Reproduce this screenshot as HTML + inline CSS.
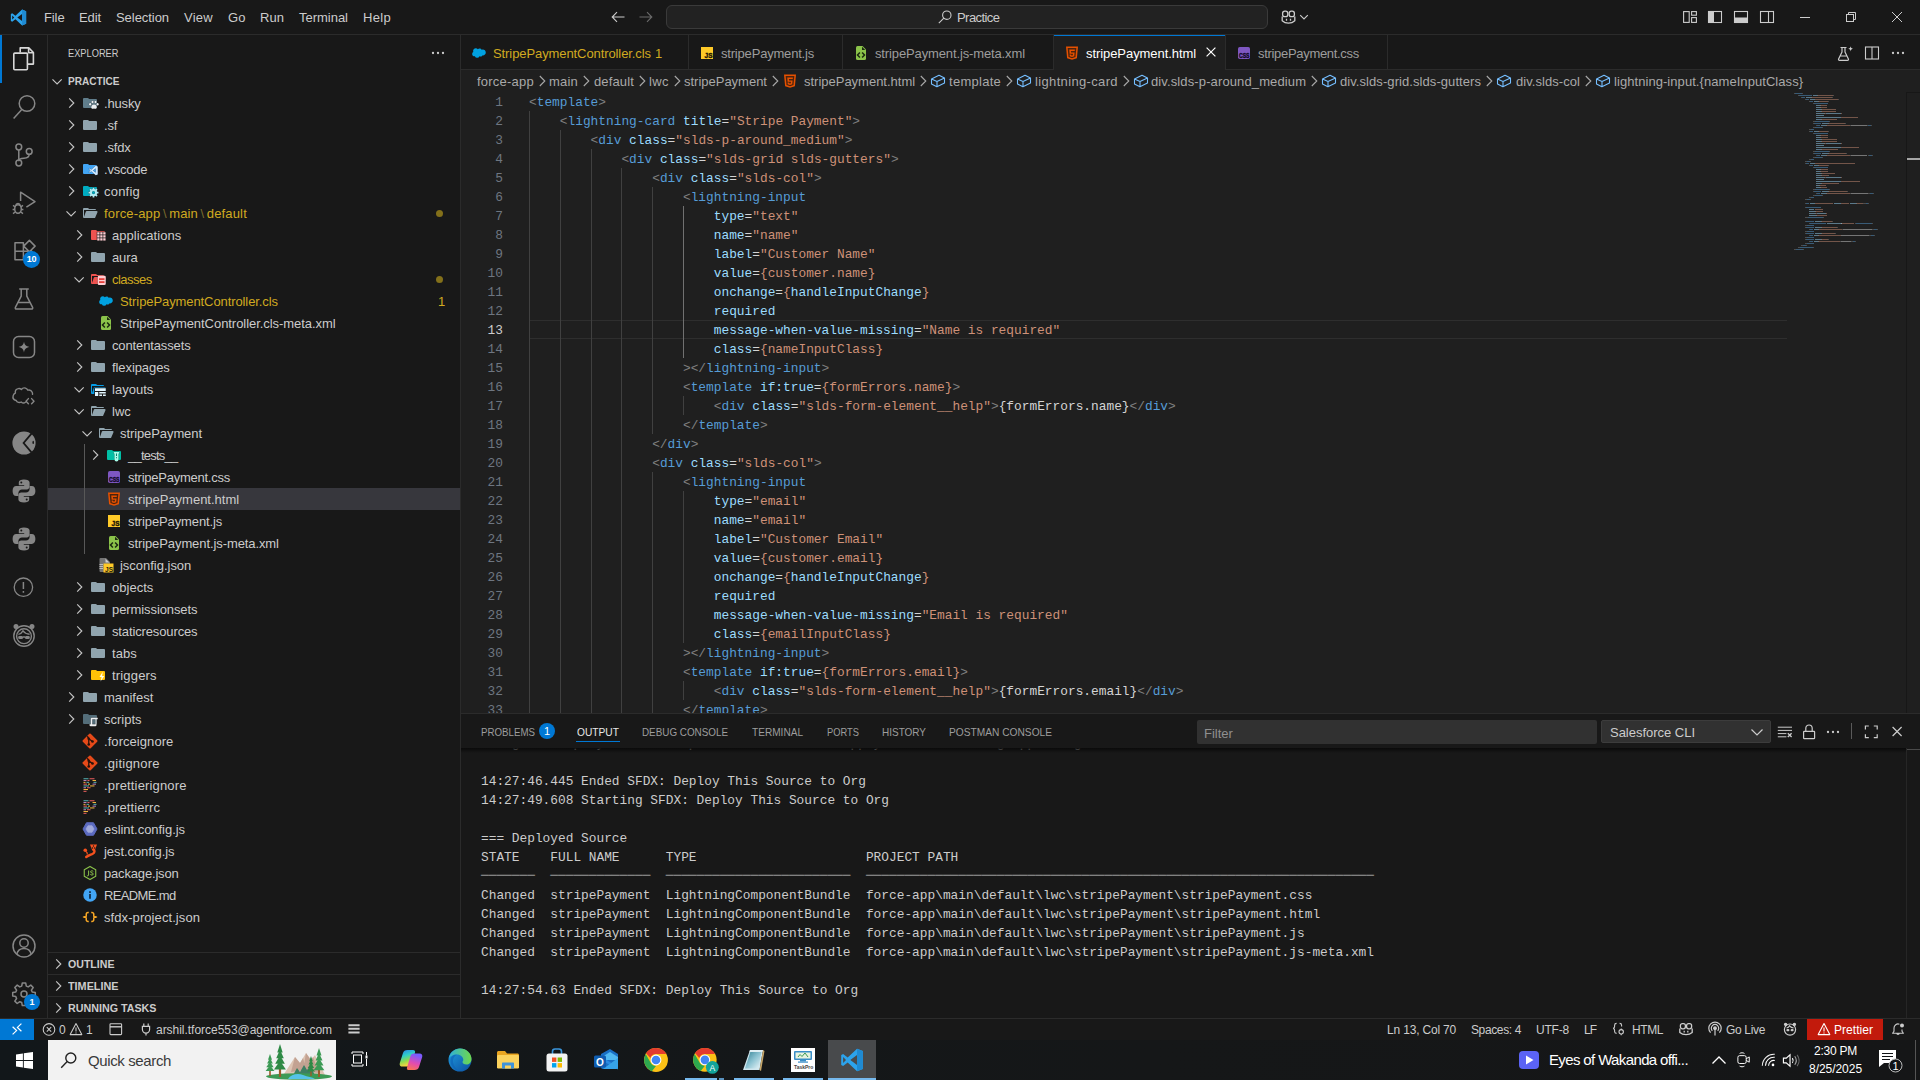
<!DOCTYPE html>
<html lang="en">
<head>
<meta charset="utf-8">
<title>stripePayment.html - Practice - Visual Studio Code</title>
<style>
*{box-sizing:border-box;margin:0;padding:0}
html,body{width:1920px;height:1080px;overflow:hidden;background:#181818}
body{position:relative;font-family:"Liberation Sans",sans-serif;font-size:13px;color:#ccc;-webkit-font-smoothing:antialiased}
.abs{position:absolute}
svg{display:block;overflow:visible}
.t{position:absolute;white-space:pre;line-height:1}
/* title bar */
#titlebar{position:absolute;left:0;top:0;width:1920px;height:35px;background:#181818;border-bottom:1px solid #2b2b2b}
#titlebar .m{position:absolute;top:10px;font-size:13px;color:#ccc;white-space:pre;line-height:15px}
#cmd{position:absolute;left:666px;top:5px;width:602px;height:24px;border:1px solid #3a3a3a;border-radius:6px;background:#222222}
/* activity bar */
#activity{position:absolute;left:0;top:35px;width:48px;height:983px;background:#181818;border-right:1px solid #2b2b2b}
#activity .ic{position:absolute;left:12px;width:24px;height:24px;color:#868686}
/* sidebar */
#sidebar{position:absolute;left:48px;top:35px;width:413px;height:983px;background:#181818;border-right:1px solid #2b2b2b;overflow:hidden}
.row{position:absolute;left:0;width:412px;height:22px}
.row .lb{position:absolute;top:4px;line-height:16px;font-size:13px;white-space:pre;color:#ccc}
.row .ch{position:absolute;top:3px;width:16px;height:16px;color:#c5c5c5}
.row .fi{position:absolute;top:3px;width:16px;height:16px}
.mod .lb{color:#d0aa20}
.sel{background:#37373d}
.ph{position:absolute;left:0;width:412px;height:22px;box-shadow:inset 0 1px 0 #2b2b2b}
.ph .lb{position:absolute;left:20px;top:4px;font-size:11px;font-weight:bold;color:#ccc;line-height:14px;white-space:pre}
.ph .ch{position:absolute;left:2px;top:3px;width:16px;height:16px;color:#c5c5c5}
/* editor */
#editor{position:absolute;left:461px;top:35px;width:1459px;height:678px;background:#1f1f1f;overflow:hidden}
#tabs{position:absolute;left:0;top:0;width:1459px;height:35px;background:#181818;border-bottom:1px solid #2b2b2b}
.tab{position:absolute;top:0;height:35px;border-right:1px solid #2b2b2b;color:#9d9d9d}
.tab .lb{position:absolute;top:10.500px;line-height:16px;font-size:13px;white-space:pre}
.tab .fi{position:absolute;top:10px;width:16px;height:16px}
.tab.act{background:#1f1f1f;box-shadow:inset 0 1px 0 #0078d4;color:#fff;height:36px}
#crumbs{position:absolute;left:0;top:35px;width:1459px;height:22px;background:#1f1f1f;color:#a9a9a9}
#crumbs .c{position:absolute;top:4px;line-height:16px;font-size:13px;white-space:pre}
#crumbs .sep{position:absolute;top:3px;width:16px;height:16px;color:#a9a9a9}
#crumbs .fi{position:absolute;top:3px;width:16px;height:16px}
#code{position:absolute;left:0;top:57px;width:1459px;height:621px;overflow:hidden;font-family:"Liberation Mono",monospace;font-size:12.832px;color:#d4d4d4}
.cl{position:absolute;left:68px;height:19px;line-height:21px;white-space:pre}
.nu{position:absolute;left:0;width:42px;height:19px;line-height:21px;text-align:right;color:#6e7681}
.nu.cur{color:#ccc}
.g{position:absolute;width:1px;background:#404040}
.g.a{background:#707070}
.p{color:#808080}.n{color:#569cd6}.a{color:#9cdcfe}.s{color:#ce9178}.w{color:#d4d4d4}
/* panel */
#panel{position:absolute;left:461px;top:714px;width:1459px;height:304px;background:#181818;overflow:hidden}
#panel .pt{position:absolute;top:11px;font-size:11px;line-height:14px;color:#9d9d9d;white-space:pre}
#out{position:absolute;left:0;top:34px;width:1445px;height:270px;overflow:hidden;font-family:"Liberation Mono",monospace;font-size:12.832px;color:#ccc}
.ol{position:absolute;left:20px;height:19px;line-height:19px;white-space:pre}
/* status */
#status{position:absolute;left:0;top:1018px;width:1920px;height:22px;background:#181818;box-shadow:inset 0 1px 0 #2b2b2b;color:#ccc;font-size:12px}
#status .s{position:absolute;top:4.500px;line-height:15px;white-space:pre;color:#ccc}
#status .ic{position:absolute;top:4px;width:14px;height:14px;color:#ccc}
/* taskbar */
#taskbar{position:absolute;left:0;top:1040px;width:1920px;height:40px;background:linear-gradient(90deg,#12171a,#151718 60%,#151617)}
</style>
</head>
<body>
<div id="titlebar">
<svg class="abs" style="left:10px;top:9px" width="17" height="17" viewBox="0 0 100 100"><path d="M71 3 32 40 13 25 5 29v42l8 4 19-15 39 37 24-10V13zM13 62V38l12 12zm58 9L43 50l28-21z" fill="#2ca3ec"/><path d="M71 3 95 13v74L71 97z" fill="#1f8ad2"/></svg>
<span class="m" style="letter-spacing:-0.11px;left:44px">File</span>
<span class="m" style="letter-spacing:-0.10px;left:79px">Edit</span>
<span class="m" style="letter-spacing:-0.05px;left:116px">Selection</span>
<span class="m" style="letter-spacing:0.26px;left:184px">View</span>
<span class="m" style="letter-spacing:0.08px;left:228px">Go</span>
<span class="m" style="letter-spacing:0.05px;left:260px">Run</span>
<span class="m" style="letter-spacing:-0.02px;left:299px">Terminal</span>
<span class="m" style="letter-spacing:0.31px;left:363px">Help</span>
<svg class="abs" style="left:610px;top:9px" width="16" height="16" viewBox="0 0 16 16" fill="none" stroke="#ccc" stroke-width="1.1"><path d="M14.5 8h-12M7 3.2 2.2 8 7 12.8"/></svg>
<svg class="abs" style="left:638px;top:9px" width="16" height="16" viewBox="0 0 16 16" fill="none" stroke="#6b6b6b" stroke-width="1.1"><path d="M1.5 8h12M9 3.2 13.8 8 9 12.8"/></svg>
<div id="cmd"></div>
<svg class="abs" style="left:937px;top:9px" width="16" height="16" viewBox="0 0 16 16" fill="none" stroke="#ccc" stroke-width="1.1"><circle cx="9.8" cy="6.2" r="4.2"/><path d="M6.8 9.2 1.8 14.2"/></svg>
<span class="m" style="letter-spacing:-0.56px;left:957px">Practice</span>
<svg class="abs" style="left:1280px;top:9px" width="17" height="16" viewBox="0 0 17 16" fill="none" stroke="#ccc" stroke-width="1.3"><path d="M2.2 7.5v4.2c1.8 1.7 4 2.4 6.3 2.4s4.500-.7 6.300-2.400V7.500"/><rect x="2.600" y="2.200" width="5.200" height="5.400" rx="2.200"/><rect x="9.200" y="2.200" width="5.200" height="5.400" rx="2.200"/><path d="M6.500 9.700v2M10.500 9.700v2"/></svg>
<svg class="abs" style="left:1299px;top:12px" width="10" height="10" viewBox="0 0 10 10" fill="none" stroke="#ccc" stroke-width="1.1"><path d="M1.200 3.200 5 7l3.800-3.800"/></svg>
<svg class="abs" style="left:1682px;top:9px" width="16" height="16" viewBox="0 0 16 16" fill="none" stroke="#ccc" stroke-width="1.1"><rect x="1.600" y="2.600" width="5.600" height="10.800"/><rect x="9.600" y="2.600" width="4.800" height="3.600"/><rect x="9.600" y="8.600" width="4.800" height="4.800"/></svg>
<svg class="abs" style="left:1707px;top:9px" width="16" height="16" viewBox="0 0 16 16"><rect x="1.500" y="2.500" width="13" height="11" fill="none" stroke="#ccc" stroke-width="1.1"/><rect x="1.500" y="2.500" width="5.500" height="11" fill="#ccc"/></svg>
<svg class="abs" style="left:1733px;top:9px" width="16" height="16" viewBox="0 0 16 16"><rect x="1.500" y="2.500" width="13" height="11" fill="none" stroke="#ccc" stroke-width="1.1"/><rect x="1.500" y="8.500" width="13" height="5" fill="#ccc"/></svg>
<svg class="abs" style="left:1759px;top:9px" width="16" height="16" viewBox="0 0 16 16" fill="none" stroke="#ccc" stroke-width="1.1"><rect x="1.500" y="2.500" width="13" height="11"/><path d="M9.500 2.500v11"/></svg>
<svg class="abs" style="left:1799px;top:12px" width="12" height="12" viewBox="0 0 12 12" fill="none" stroke="#ccc" stroke-width="1"><path d="M1 5.500h10"/></svg>
<svg class="abs" style="left:1845px;top:11px" width="12" height="12" viewBox="0 0 12 12" fill="none" stroke="#ccc" stroke-width="1"><rect x="1.500" y="3.500" width="7" height="7"/><path d="M3.500 3.500v-2h7v7h-2"/></svg>
<svg class="abs" style="left:1891px;top:11px" width="12" height="12" viewBox="0 0 12 12" fill="none" stroke="#ccc" stroke-width="1"><path d="M1 1l10 10M11 1 1 11"/></svg>
</div>

<div id="activity">
<div class="abs" style="left:0;top:0;width:2px;height:48px;background:#0078d4"></div>
<svg class="ic" style="top:12px;color:#d7d7d7" viewBox="0 0 24 24" fill="none" stroke="currentColor" stroke-width="1.600" stroke-linejoin="round"><path d="M8.200 5.600V.9h8.600l4.600 4.600v11.600h-5.600"/><path d="M16.600 1.100v4.600h4.600"/><rect x="1.800" y="6.100" width="13.600" height="16.600" rx="1"/></svg>
<svg class="ic" style="top:60px" viewBox="0 0 24 24" fill="none" stroke="currentColor" stroke-width="1.500"><circle cx="15" cy="8.500" r="7.800"/><path d="M9.800 14.400 1.600 23.600"/></svg>
<svg class="ic" style="top:108px" viewBox="0 0 24 24" fill="none" stroke="currentColor" stroke-width="1.500"><circle cx="6.800" cy="4" r="2.900"/><circle cx="6.800" cy="20" r="2.900"/><circle cx="17.200" cy="8.400" r="2.900"/><path d="M6.800 6.900v10.200M17.200 11.300c0 3.200-2.700 3.900-5.200 3.900-2.600 0-5.200.7-5.200 3"/></svg>
<svg class="ic" style="top:156px" viewBox="0 0 24 24" fill="none" stroke="currentColor" stroke-width="1.500" stroke-linejoin="round"><path d="M8.600 10V1.200l14.400 9.400-8.600 5.600"/><ellipse cx="6" cy="18" rx="3.300" ry="4.200"/><path d="M1 14.400l2.200 1.400M11 14.400l-2.200 1.400M.6 18.400h2.100M11.400 18.400H9.300M1 22.600l2.200-1.600M11 22.600l-2.200-1.600M3.600 14.800c.4-1.600 1.300-2.200 2.400-2.200s2 .6 2.400 2.200"/></svg>
<svg class="ic" style="top:204px" viewBox="0 0 24 24" fill="none" stroke="currentColor" stroke-width="1.500" stroke-linejoin="round"><path d="M3 3.800h8.400v8.400H3zM3 12.200h8.400v8.600H3zM11.400 12.200h8.400v8.600h-8.400zM17.400 1.400l5.700 5.700-5.700 5.700-5.700-5.700z"/></svg>
<div class="abs" style="left:23px;top:216px;width:17px;height:17px;border-radius:9px;background:#0078d4;color:#fff;font-size:9px;font-weight:bold;line-height:17px;text-align:center;letter-spacing:-0.3px">10</div>
<svg class="ic" style="top:252px" viewBox="0 0 24 24" fill="none" stroke="currentColor" stroke-width="1.500" stroke-linejoin="round"><path d="M7.200 2h9.600M9.200 2v7.200L3.400 20.400c-.4.800.1 1.600 1 1.600h15.200c.9 0 1.400-.8 1-1.600L14.800 9.200V2M6.400 15.400h11.200"/></svg>
<svg class="ic" style="top:300px" viewBox="0 0 24 24" fill="none" stroke="currentColor" stroke-width="1.500"><rect x="1.500" y="1.600" width="21" height="20.800" rx="5"/><path d="M12 6.600c.6 3.400 1.800 4.600 5.400 5.400-3.600.8-4.800 2-5.400 5.400-.6-3.400-1.800-4.600-5.400-5.400 3.600-.8 4.800-2 5.400-5.400z" fill="currentColor" stroke="none"/></svg>
<svg class="ic" style="top:348px" viewBox="0 0 24 24" fill="none" stroke="currentColor" stroke-width="1.400" stroke-linejoin="round" stroke-linecap="round"><path d="M13.400 19.200c-1 .9-2.900 1-4.200-.2-1.600 1-4.200.6-5-1.500C1.800 16.800.6 14.700 1.200 12.600c.4-1.500 1.400-2.300 2.200-2.600-.4-2.200.8-4 2.800-4.400 1.300-.3 2.500.2 3.200.9.900-1.300 2.500-1.900 4.100-1.400 1.200.4 2 1.200 2.400 2.100 1.800-.5 3.600.5 4.300 2.100.3.700.4 1.400.3 2"/><path d="M16.400 15.600l-2.400 2.600 2.400 2.600M19.600 15.600l2.400 2.600-2.400 2.600"/></svg>
<svg class="ic" style="top:396px" viewBox="0 0 24 24"><circle cx="12" cy="12" r="11.600" fill="currentColor"/><path d="M19.500 2.600 11.600 12l7.900 9.400" fill="none" stroke="#181818" stroke-width="1.800"/><ellipse cx="21.200" cy="11.400" rx=".8" ry="1.700" fill="#181818"/></svg>
<svg class="ic" style="top:444px" viewBox="0 0 24 24" fill="currentColor"><path d="M11.900.6C9 .6 6.800 1.300 6.800 3.600v2.600h5.400v.9H4.300C2 7.100.6 8.900.6 12s1.300 5 3.600 5h2.200v-2.900c0-2 1.600-3.600 3.600-3.600h4.800c1.600 0 2.800-1.300 2.800-2.900v-4C17.600 1.500 15.300.6 11.900.6zM9.300 2.400a1 1 0 1 1 0 2 1 1 0 0 1 0-2z"/><path d="M12.100 23.400c2.900 0 5.100-.7 5.100-3v-2.600h-5.400v-.9h7.900c2.300 0 3.700-1.800 3.700-4.900s-1.300-5-3.600-5h-2.200v2.900c0 2-1.600 3.600-3.600 3.600H9.200c-1.600 0-2.800 1.300-2.800 2.900v4c0 2.100 2.300 3 5.700 3zm2.600-1.800a1 1 0 1 1 0-2 1 1 0 0 1 0 2z"/></svg>
<svg class="ic" style="top:492px" viewBox="0 0 24 24" fill="currentColor"><path d="M11.900.6C9 .6 6.800 1.300 6.800 3.600v2.600h5.400v.9H4.300C2 7.100.6 8.900.6 12s1.300 5 3.600 5h2.200v-2.900c0-2 1.600-3.600 3.600-3.600h4.800c1.600 0 2.800-1.300 2.800-2.900v-4C17.600 1.500 15.300.6 11.900.6zM9.300 2.400a1 1 0 1 1 0 2 1 1 0 0 1 0-2z"/><path d="M12.100 23.400c2.900 0 5.100-.7 5.100-3v-2.600h-5.400v-.9h7.900c2.300 0 3.700-1.800 3.700-4.900s-1.300-5-3.600-5h-2.200v2.900c0 2-1.600 3.600-3.600 3.600H9.200c-1.600 0-2.800 1.300-2.800 2.900v4c0 2.100 2.300 3 5.700 3zm2.600-1.800a1 1 0 1 1 0-2 1 1 0 0 1 0 2z"/></svg>
<svg class="ic" style="top:540px" viewBox="0 0 24 24" fill="none" stroke="currentColor" stroke-width="1.300"><circle cx="11.400" cy="12.200" r="9.200"/><path d="M11.400 7v7M11.400 16v1.800" stroke-width="1.500"/></svg>
<svg class="ic" style="top:588px" viewBox="0 0 24 24" fill="none" stroke="currentColor" stroke-width="1.400"><circle cx="12" cy="13" r="10.200"/><circle cx="12" cy="13.200" r="7.400"/><circle cx="4" cy="3.600" r="1.800" fill="currentColor"/><circle cx="20" cy="3.600" r="1.800" fill="currentColor"/><path d="M6.400 11.400c2-.4 3.400-1.600 4.600-3.600 1.400 2 3.600 3.200 6.600 3.400" /><rect x="6.200" y="13" width="4.800" height="3" rx="1.300" fill="currentColor" stroke="none"/><rect x="13" y="13" width="4.800" height="3" rx="1.300" fill="currentColor" stroke="none"/><path d="M11 14h2"/></svg>
<svg class="ic" style="top:899px" viewBox="0 0 24 24" fill="none" stroke="currentColor" stroke-width="1.500"><circle cx="12" cy="12" r="11"/><circle cx="12" cy="9" r="4.200"/><path d="M4.800 20.200c.8-3.600 3.600-5.800 7.200-5.800s6.400 2.200 7.200 5.800"/></svg>
<svg class="ic" style="top:947px" viewBox="0 0 24 24" fill="none" stroke="currentColor" stroke-width="1.500" stroke-linejoin="round"><path d="M10.300 1h3.400l.6 3.100 1.900.8 2.600-1.800 2.400 2.400-1.800 2.600.8 1.900 3.100.6v3.400l-3.100.6-.8 1.900 1.800 2.600-2.400 2.400-2.600-1.800-1.900.8-.6 3.100h-3.400l-.6-3.100-1.900-.8-2.600 1.800-2.400-2.400 1.800-2.600-.8-1.900-3.100-.6v-3.400l3.100-.6.800-1.900-1.800-2.600 2.400-2.400 2.600 1.800 1.900-.8z"/><circle cx="12" cy="12" r="3"/></svg>
<div class="abs" style="left:24px;top:959px;width:16px;height:16px;border-radius:8px;background:#0078d4;color:#fff;font-size:9px;font-weight:bold;line-height:16px;text-align:center">1</div>
</div>

<div id="sidebar">
<span class="t" style="transform-origin:0 50%;transform:scaleX(0.843);left:20px;top:13px;font-size:11px;color:#ccc">EXPLORER</span>
<svg class="abs" style="left:382px;top:10px" width="16" height="16" viewBox="0 0 16 16" fill="#ccc"><circle cx="3" cy="8" r="1.150"/><circle cx="8" cy="8" r="1.150"/><circle cx="13" cy="8" r="1.150"/></svg>
<div class="ph" style="top:35px;box-shadow:none"><svg class="ch" viewBox="0 0 16 16" fill="none" stroke="currentColor" stroke-width="1.150"><path d="M2.500 6.300 7.100 10.900l4.600-4.600"/></svg><span class="lb" style="transform-origin:0 50%;transform:scaleX(0.916);">PRACTICE</span></div>
<div class="row" style="top:57px"><svg class="ch" style="left:16px" viewBox="0 0 16 16" fill="none" stroke="currentColor" stroke-width="1.150"><path d="M5.200 3.400 9.800 8l-4.600 4.600"/></svg><svg class="fi" style="left:34px" viewBox="0 0 32 32"><path d="M13.844 7.536l-1.288-1.072A2 2 0 0 0 11.276 6H4a2 2 0 0 0-2 2v16a2 2 0 0 0 2 2h24a2 2 0 0 0 2-2V10a2 2 0 0 0-2-2H15.124a2 2 0 0 1-1.280-.464z" fill="#607d8b"/><g fill="#eceff1" stroke="#181818" stroke-width="0.700" paint-order="stroke" stroke-linejoin="round"><path d="M18.500 24.500c0-3 2.500-5.500 5.500-5.500s5.500 2.500 5.500 5.500c0 2-1.500 3-3 3-1 0-1.500-.500-2.500-.500s-1.500.500-2.500.500c-1.500 0-3-1-3-3z"/><ellipse cx="16.300" cy="18.500" rx="2" ry="2.600"/><ellipse cx="21" cy="14" rx="2" ry="2.600"/><ellipse cx="27" cy="14" rx="2" ry="2.600"/><ellipse cx="31.200" cy="18.500" rx="2" ry="2.600"/></g></svg><span class="lb" style="letter-spacing:-0.16px;left:56px">.husky</span></div>
<div class="row" style="top:79px"><svg class="ch" style="left:16px" viewBox="0 0 16 16" fill="none" stroke="currentColor" stroke-width="1.150"><path d="M5.200 3.400 9.800 8l-4.600 4.600"/></svg><svg class="fi" style="left:34px" viewBox="0 0 32 32"><path d="M13.844 7.536l-1.288-1.072A2 2 0 0 0 11.276 6H4a2 2 0 0 0-2 2v16a2 2 0 0 0 2 2h24a2 2 0 0 0 2-2V10a2 2 0 0 0-2-2H15.124a2 2 0 0 1-1.280-.464z" fill="#90a4ae"/></svg><span class="lb" style="letter-spacing:-0.14px;left:56px">.sf</span></div>
<div class="row" style="top:101px"><svg class="ch" style="left:16px" viewBox="0 0 16 16" fill="none" stroke="currentColor" stroke-width="1.150"><path d="M5.200 3.400 9.800 8l-4.600 4.600"/></svg><svg class="fi" style="left:34px" viewBox="0 0 32 32"><path d="M13.844 7.536l-1.288-1.072A2 2 0 0 0 11.276 6H4a2 2 0 0 0-2 2v16a2 2 0 0 0 2 2h24a2 2 0 0 0 2-2V10a2 2 0 0 0-2-2H15.124a2 2 0 0 1-1.280-.464z" fill="#90a4ae"/></svg><span class="lb" style="letter-spacing:-0.17px;left:56px">.sfdx</span></div>
<div class="row" style="top:123px"><svg class="ch" style="left:16px" viewBox="0 0 16 16" fill="none" stroke="currentColor" stroke-width="1.150"><path d="M5.200 3.400 9.800 8l-4.600 4.600"/></svg><svg class="fi" style="left:34px" viewBox="0 0 32 32"><path d="M13.844 7.536l-1.288-1.072A2 2 0 0 0 11.276 6H4a2 2 0 0 0-2 2v16a2 2 0 0 0 2 2h24a2 2 0 0 0 2-2V10a2 2 0 0 0-2-2H15.124a2 2 0 0 1-1.280-.464z" fill="#42a5f5"/><path d="M27.500 9.500l-9 8-3.400-2.600-1.600.8 3.600 3.300-3.600 3.300 1.600.8 3.400-2.600 9 8 4-1.700V11.200zm0 5.200v8.600L22 19z" fill="#cfe8ff" stroke="#181818" stroke-width="0.700" paint-order="stroke" stroke-linejoin="round"/></svg><span class="lb" style="letter-spacing:-0.22px;left:56px">.vscode</span></div>
<div class="row" style="top:145px"><svg class="ch" style="left:16px" viewBox="0 0 16 16" fill="none" stroke="currentColor" stroke-width="1.150"><path d="M5.200 3.400 9.800 8l-4.600 4.600"/></svg><svg class="fi" style="left:34px" viewBox="0 0 32 32"><path d="M13.844 7.536l-1.288-1.072A2 2 0 0 0 11.276 6H4a2 2 0 0 0-2 2v16a2 2 0 0 0 2 2h24a2 2 0 0 0 2-2V10a2 2 0 0 0-2-2H15.124a2 2 0 0 1-1.280-.464z" fill="#00acc1"/><path d="M32.9 17.5 32.9 20.9 30.2 20.9 29.3 23.1 31.2 25.0 28.8 27.4 26.9 25.5 24.7 26.4 24.7 29.1 21.3 29.1 21.3 26.4 19.1 25.5 17.2 27.4 14.8 25.0 16.7 23.1 15.8 20.9 13.1 20.9 13.1 17.5 15.8 17.5 16.7 15.3 14.8 13.4 17.2 11.0 19.1 12.9 21.3 12.0 21.3 9.3 24.7 9.3 24.7 12.0 26.9 12.9 28.8 11.0 31.2 13.4 29.3 15.3 30.2 17.5zM19.8 19.2a3.2 3.2 0 1 0 6.4 0a3.2 3.2 0 1 0 -6.4 0z" fill="#b2ebf2" fill-rule="evenodd" stroke="#181818" stroke-width="0.700" paint-order="stroke" stroke-linejoin="round"/></svg><span class="lb" style="letter-spacing:0.22px;left:56px">config</span></div>
<div class="row mod" style="top:167px"><svg class="ch" style="left:16px" viewBox="0 0 16 16" fill="none" stroke="currentColor" stroke-width="1.150"><path d="M2.500 6.300 7.100 10.900l4.600-4.600"/></svg><svg class="fi" style="left:34px" viewBox="0 0 32 32"><path d="M28.967 12H9.442a2 2 0 0 0-1.898 1.368L4 24V10h24a2 2 0 0 0-2-2H15.124a2 2 0 0 1-1.280-.464l-1.288-1.072A2 2 0 0 0 11.276 6H4a2 2 0 0 0-2 2v16a2 2 0 0 0 2 2h22l4.805-11.212A2 2 0 0 0 28.967 12z" fill="#90a4ae"/></svg><span class="lb" style="letter-spacing:0.16px;left:56px">force-app<span style="color:#7a6c2e;margin:0 2.500px">\</span>main<span style="color:#7a6c2e;margin:0 2.500px">\</span>default</span><div class="abs" style="left:388px;top:8px;width:7px;height:7px;border-radius:4px;background:#83701a"></div></div>
<div class="row" style="top:189px"><svg class="ch" style="left:24px" viewBox="0 0 16 16" fill="none" stroke="currentColor" stroke-width="1.150"><path d="M5.200 3.400 9.800 8l-4.600 4.600"/></svg><svg class="fi" style="left:42px" viewBox="0 0 32 32"><path d="M13.844 7.536l-1.288-1.072A2 2 0 0 0 11.276 6H4a2 2 0 0 0-2 2v16a2 2 0 0 0 2 2h24a2 2 0 0 0 2-2V10a2 2 0 0 0-2-2H15.124a2 2 0 0 1-1.280-.464z" fill="#ef5350"/><rect x="13.500" y="9.500" width="19" height="19" fill="#181818"/><g fill="#ffcdd2"><rect x="14.5" y="10.5" width="4.600" height="4.600"/><rect x="14.5" y="16.5" width="4.600" height="4.600"/><rect x="14.5" y="22.5" width="4.600" height="4.600"/><rect x="20.5" y="10.5" width="4.600" height="4.600"/><rect x="20.5" y="16.5" width="4.600" height="4.600"/><rect x="20.5" y="22.5" width="4.600" height="4.600"/><rect x="26.5" y="10.5" width="4.600" height="4.600"/><rect x="26.5" y="16.5" width="4.600" height="4.600"/><rect x="26.5" y="22.5" width="4.600" height="4.600"/></g></svg><span class="lb" style="letter-spacing:0.06px;left:64px">applications</span></div>
<div class="row" style="top:211px"><svg class="ch" style="left:24px" viewBox="0 0 16 16" fill="none" stroke="currentColor" stroke-width="1.150"><path d="M5.200 3.400 9.800 8l-4.600 4.600"/></svg><svg class="fi" style="left:42px" viewBox="0 0 32 32"><path d="M13.844 7.536l-1.288-1.072A2 2 0 0 0 11.276 6H4a2 2 0 0 0-2 2v16a2 2 0 0 0 2 2h24a2 2 0 0 0 2-2V10a2 2 0 0 0-2-2H15.124a2 2 0 0 1-1.280-.464z" fill="#90a4ae"/></svg><span class="lb" style="letter-spacing:-0.11px;left:64px">aura</span></div>
<div class="row mod" style="top:233px"><svg class="ch" style="left:24px" viewBox="0 0 16 16" fill="none" stroke="currentColor" stroke-width="1.150"><path d="M2.500 6.300 7.100 10.900l4.600-4.600"/></svg><svg class="fi" style="left:42px" viewBox="0 0 32 32"><path d="M28.967 12H9.442a2 2 0 0 0-1.898 1.368L4 24V10h24a2 2 0 0 0-2-2H15.124a2 2 0 0 1-1.280-.464l-1.288-1.072A2 2 0 0 0 11.276 6H4a2 2 0 0 0-2 2v16a2 2 0 0 0 2 2h22l4.805-11.212A2 2 0 0 0 28.967 12z" fill="#ef5350"/><rect x="15.500" y="9.500" width="16" height="18.500" rx="2.500" fill="#ffcdd2" stroke="#181818" stroke-width="0.700" paint-order="stroke" stroke-linejoin="round"/><rect x="18" y="14.500" width="11" height="3.400" fill="#e53935"/><rect x="18" y="20.500" width="11" height="3.400" fill="#e53935"/></svg><span class="lb" style="letter-spacing:-0.52px;left:64px">classes</span><div class="abs" style="left:388px;top:8px;width:7px;height:7px;border-radius:4px;background:#83701a"></div></div>
<div class="row mod" style="top:255px"><svg class="fi" style="left:50px" viewBox="0 0 32 32"><path transform="translate(1.800,1.600) scale(.89)" d="M13.300 7.800a5.300 5.300 0 0 1 3.900-1.700c2 0 3.800 1.100 4.700 2.800a6.400 6.400 0 0 1 2.700-.600c3.600 0 6.600 3 6.600 6.700s-3 6.700-6.600 6.700c-.500 0-.900 0-1.300-.100a4.800 4.800 0 0 1-6.300 2 5.500 5.500 0 0 1-10.300-.300 5 5 0 0 1-1 .100c-2.800 0-5.100-2.300-5.100-5.200 0-1.900 1-3.600 2.600-4.500a6 6 0 0 1-.500-2.400c0-3.300 2.700-6 6-6 1.900 0 3.600.900 4.600 2.500z" fill="#00a1e0"/></svg><span class="lb" style="letter-spacing:-0.09px;left:72px">StripePaymentController.cls</span><span class="lb" style="left:390px;color:#d0aa20">1</span></div>
<div class="row" style="top:277px"><svg class="fi" style="left:50px" viewBox="0 0 32 32"><path d="M9 2h10l7 7v18a3 3 0 0 1-3 3H9a3 3 0 0 1-3-3V5a3 3 0 0 1 3-3z" fill="#8bc34a"/><path d="M18 3.500V10h6.500z" fill="#1b2a10"/><path d="M13.800 15l-4.800 5 4.800 5M18.200 15l4.800 5-4.800 5" fill="none" stroke="#1b2a10" stroke-width="3"/></svg><span class="lb" style="letter-spacing:-0.05px;left:72px">StripePaymentController.cls-meta.xml</span></div>
<div class="row" style="top:299px"><svg class="ch" style="left:24px" viewBox="0 0 16 16" fill="none" stroke="currentColor" stroke-width="1.150"><path d="M5.200 3.400 9.800 8l-4.600 4.600"/></svg><svg class="fi" style="left:42px" viewBox="0 0 32 32"><path d="M13.844 7.536l-1.288-1.072A2 2 0 0 0 11.276 6H4a2 2 0 0 0-2 2v16a2 2 0 0 0 2 2h24a2 2 0 0 0 2-2V10a2 2 0 0 0-2-2H15.124a2 2 0 0 1-1.280-.464z" fill="#90a4ae"/></svg><span class="lb" style="letter-spacing:-0.13px;left:64px">contentassets</span></div>
<div class="row" style="top:321px"><svg class="ch" style="left:24px" viewBox="0 0 16 16" fill="none" stroke="currentColor" stroke-width="1.150"><path d="M5.200 3.400 9.800 8l-4.600 4.600"/></svg><svg class="fi" style="left:42px" viewBox="0 0 32 32"><path d="M13.844 7.536l-1.288-1.072A2 2 0 0 0 11.276 6H4a2 2 0 0 0-2 2v16a2 2 0 0 0 2 2h24a2 2 0 0 0 2-2V10a2 2 0 0 0-2-2H15.124a2 2 0 0 1-1.280-.464z" fill="#90a4ae"/></svg><span class="lb" style="letter-spacing:-0.08px;left:64px">flexipages</span></div>
<div class="row" style="top:343px"><svg class="ch" style="left:24px" viewBox="0 0 16 16" fill="none" stroke="currentColor" stroke-width="1.150"><path d="M2.500 6.300 7.100 10.900l4.600-4.600"/></svg><svg class="fi" style="left:42px" viewBox="0 0 32 32"><path d="M28.967 12H9.442a2 2 0 0 0-1.898 1.368L4 24V10h24a2 2 0 0 0-2-2H15.124a2 2 0 0 1-1.280-.464l-1.288-1.072A2 2 0 0 0 11.276 6H4a2 2 0 0 0-2 2v16a2 2 0 0 0 2 2h22l4.805-11.212A2 2 0 0 0 28.967 12z" fill="#039be5"/><rect x="8.500" y="13" width="24" height="18" fill="#181818"/><g fill="#e1f5fe"><rect x="10" y="14.500" width="21.500" height="5.500"/><rect x="10" y="22" width="6.500" height="8"/><rect x="18.500" y="22" width="13" height="3"/><rect x="18.500" y="27" width="5.500" height="3"/><rect x="26" y="27" width="5.500" height="3"/></g></svg><span class="lb" style="letter-spacing:0.03px;left:64px">layouts</span></div>
<div class="row" style="top:365px"><svg class="ch" style="left:24px" viewBox="0 0 16 16" fill="none" stroke="currentColor" stroke-width="1.150"><path d="M2.500 6.300 7.100 10.900l4.600-4.600"/></svg><svg class="fi" style="left:42px" viewBox="0 0 32 32"><path d="M28.967 12H9.442a2 2 0 0 0-1.898 1.368L4 24V10h24a2 2 0 0 0-2-2H15.124a2 2 0 0 1-1.280-.464l-1.288-1.072A2 2 0 0 0 11.276 6H4a2 2 0 0 0-2 2v16a2 2 0 0 0 2 2h22l4.805-11.212A2 2 0 0 0 28.967 12z" fill="#90a4ae"/></svg><span class="lb" style="letter-spacing:0.04px;left:64px">lwc</span></div>
<div class="row" style="top:387px"><svg class="ch" style="left:32px" viewBox="0 0 16 16" fill="none" stroke="currentColor" stroke-width="1.150"><path d="M2.500 6.300 7.100 10.900l4.600-4.600"/></svg><svg class="fi" style="left:50px" viewBox="0 0 32 32"><path d="M28.967 12H9.442a2 2 0 0 0-1.898 1.368L4 24V10h24a2 2 0 0 0-2-2H15.124a2 2 0 0 1-1.280-.464l-1.288-1.072A2 2 0 0 0 11.276 6H4a2 2 0 0 0-2 2v16a2 2 0 0 0 2 2h22l4.805-11.212A2 2 0 0 0 28.967 12z" fill="#90a4ae"/></svg><span class="lb" style="letter-spacing:-0.09px;left:72px">stripePayment</span></div>
<div class="row" style="top:409px"><svg class="ch" style="left:40px" viewBox="0 0 16 16" fill="none" stroke="currentColor" stroke-width="1.150"><path d="M5.200 3.400 9.800 8l-4.600 4.600"/></svg><svg class="fi" style="left:58px" viewBox="0 0 32 32"><path d="M13.844 7.536l-1.288-1.072A2 2 0 0 0 11.276 6H4a2 2 0 0 0-2 2v16a2 2 0 0 0 2 2h24a2 2 0 0 0 2-2V10a2 2 0 0 0-2-2H15.124a2 2 0 0 1-1.280-.464z" fill="#00bfa5"/><path d="M15.500 10h11v3h-1.500v12a4 4 0 0 1-8 0V13h-1.500zm4.500 3v5h2v-5zm0 7.500v2h2v-2z" fill="#a7ffeb" stroke="#181818" stroke-width="0.700" paint-order="stroke" stroke-linejoin="round"/></svg><span class="lb" style="letter-spacing:-0.76px;left:80px">__tests__</span></div>
<div class="row" style="top:431px"><svg class="fi" style="left:58px" viewBox="0 0 32 32"><rect x="4" y="4" width="24" height="24" rx="3.500" fill="#7e57c2"/><text x="16.500" y="26.800" font-family="Liberation Sans,sans-serif" font-weight="bold" font-size="14.500" text-anchor="middle" fill="#140b2c" stroke="#140b2c" stroke-width=".9" textLength="21" lengthAdjust="spacingAndGlyphs">CSS</text></svg><span class="lb" style="letter-spacing:-0.25px;left:80px">stripePayment.css</span></div>
<div class="row sel" style="top:453px"><svg class="fi" style="left:58px" viewBox="0 0 32 32"><path d="M4 3h24l-2.200 23.300L16 29.500l-9.800-3.200z" fill="#e65100"/><path d="M7.300 6h17.400l-1.700 18L16 26.300 9 24z" fill="#4a230e"/><path d="M10.500 9h11.300l-.3 3.200h-7.700l.3 3h7.100l-.7 7.300L16 23.800l-4.500-1.300-.3-3.300h3l.1 1.100 1.700.5 1.700-.5.200-2.600h-6.700z" fill="#e65100"/></svg><span class="lb" style="letter-spacing:-0.01px;left:80px">stripePayment.html</span></div>
<div class="row" style="top:475px"><svg class="fi" style="left:58px" viewBox="0 0 32 32"><rect x="4" y="4" width="24" height="24" fill="#ffca28"/><text x="27.200" y="26.800" font-family="Liberation Sans,sans-serif" font-weight="bold" font-size="15" text-anchor="end" fill="#1f1803" stroke="#1f1803" stroke-width=".9" textLength="16" lengthAdjust="spacingAndGlyphs">JS</text></svg><span class="lb" style="letter-spacing:-0.12px;left:80px">stripePayment.js</span></div>
<div class="row" style="top:497px"><svg class="fi" style="left:58px" viewBox="0 0 32 32"><path d="M9 2h10l7 7v18a3 3 0 0 1-3 3H9a3 3 0 0 1-3-3V5a3 3 0 0 1 3-3z" fill="#8bc34a"/><path d="M18 3.500V10h6.500z" fill="#1b2a10"/><path d="M13.800 15l-4.800 5 4.800 5M18.200 15l4.800 5-4.800 5" fill="none" stroke="#1b2a10" stroke-width="3"/></svg><span class="lb" style="letter-spacing:-0.09px;left:80px">stripePayment.js-meta.xml</span></div>
<div class="row" style="top:519px"><svg class="fi" style="left:50px" viewBox="0 0 32 32"><path d="M5 2h11l8 8v6H13v14H5a2 2 0 0 1-2-2V4a2 2 0 0 1 2-2z" fill="#757575"/><path d="M15 3.500V11h7.500z" fill="#d0d0d0"/><path d="M3 14h7v2H3zM3 18h7v2H3zM3 22h7v2H3z" fill="#bdbdbd"/><rect x="11" y="13" width="20" height="18" fill="#ffca28"/><text x="30" y="29" font-family="Liberation Sans,sans-serif" font-weight="bold" font-size="13" text-anchor="end" fill="#2a2208" textLength="16" lengthAdjust="spacingAndGlyphs">JS</text></svg><span class="lb" style="letter-spacing:-0.02px;left:72px">jsconfig.json</span></div>
<div class="row" style="top:541px"><svg class="ch" style="left:24px" viewBox="0 0 16 16" fill="none" stroke="currentColor" stroke-width="1.150"><path d="M5.200 3.400 9.800 8l-4.600 4.600"/></svg><svg class="fi" style="left:42px" viewBox="0 0 32 32"><path d="M13.844 7.536l-1.288-1.072A2 2 0 0 0 11.276 6H4a2 2 0 0 0-2 2v16a2 2 0 0 0 2 2h24a2 2 0 0 0 2-2V10a2 2 0 0 0-2-2H15.124a2 2 0 0 1-1.280-.464z" fill="#90a4ae"/></svg><span class="lb" style="letter-spacing:0.03px;left:64px">objects</span></div>
<div class="row" style="top:563px"><svg class="ch" style="left:24px" viewBox="0 0 16 16" fill="none" stroke="currentColor" stroke-width="1.150"><path d="M5.200 3.400 9.800 8l-4.600 4.600"/></svg><svg class="fi" style="left:42px" viewBox="0 0 32 32"><path d="M13.844 7.536l-1.288-1.072A2 2 0 0 0 11.276 6H4a2 2 0 0 0-2 2v16a2 2 0 0 0 2 2h24a2 2 0 0 0 2-2V10a2 2 0 0 0-2-2H15.124a2 2 0 0 1-1.280-.464z" fill="#90a4ae"/></svg><span class="lb" style="letter-spacing:-0.09px;left:64px">permissionsets</span></div>
<div class="row" style="top:585px"><svg class="ch" style="left:24px" viewBox="0 0 16 16" fill="none" stroke="currentColor" stroke-width="1.150"><path d="M5.200 3.400 9.800 8l-4.600 4.600"/></svg><svg class="fi" style="left:42px" viewBox="0 0 32 32"><path d="M13.844 7.536l-1.288-1.072A2 2 0 0 0 11.276 6H4a2 2 0 0 0-2 2v16a2 2 0 0 0 2 2h24a2 2 0 0 0 2-2V10a2 2 0 0 0-2-2H15.124a2 2 0 0 1-1.280-.464z" fill="#90a4ae"/></svg><span class="lb" style="letter-spacing:-0.13px;left:64px">staticresources</span></div>
<div class="row" style="top:607px"><svg class="ch" style="left:24px" viewBox="0 0 16 16" fill="none" stroke="currentColor" stroke-width="1.150"><path d="M5.200 3.400 9.800 8l-4.600 4.600"/></svg><svg class="fi" style="left:42px" viewBox="0 0 32 32"><path d="M13.844 7.536l-1.288-1.072A2 2 0 0 0 11.276 6H4a2 2 0 0 0-2 2v16a2 2 0 0 0 2 2h24a2 2 0 0 0 2-2V10a2 2 0 0 0-2-2H15.124a2 2 0 0 1-1.280-.464z" fill="#90a4ae"/></svg><span class="lb" style="letter-spacing:0.06px;left:64px">tabs</span></div>
<div class="row" style="top:629px"><svg class="ch" style="left:24px" viewBox="0 0 16 16" fill="none" stroke="currentColor" stroke-width="1.150"><path d="M5.200 3.400 9.800 8l-4.600 4.600"/></svg><svg class="fi" style="left:42px" viewBox="0 0 32 32"><path d="M13.844 7.536l-1.288-1.072A2 2 0 0 0 11.276 6H4a2 2 0 0 0-2 2v16a2 2 0 0 0 2 2h24a2 2 0 0 0 2-2V10a2 2 0 0 0-2-2H15.124a2 2 0 0 1-1.280-.464z" fill="#ffc107"/><path d="M25.500 9.500l-6.500 10.500h4.200l-2.200 9 7.500-11h-4.200z" fill="#fffde7"/></svg><span class="lb" style="letter-spacing:0.18px;left:64px">triggers</span></div>
<div class="row" style="top:651px"><svg class="ch" style="left:16px" viewBox="0 0 16 16" fill="none" stroke="currentColor" stroke-width="1.150"><path d="M5.200 3.400 9.800 8l-4.600 4.600"/></svg><svg class="fi" style="left:34px" viewBox="0 0 32 32"><path d="M13.844 7.536l-1.288-1.072A2 2 0 0 0 11.276 6H4a2 2 0 0 0-2 2v16a2 2 0 0 0 2 2h24a2 2 0 0 0 2-2V10a2 2 0 0 0-2-2H15.124a2 2 0 0 1-1.280-.464z" fill="#90a4ae"/></svg><span class="lb" style="letter-spacing:0.04px;left:56px">manifest</span></div>
<div class="row" style="top:673px"><svg class="ch" style="left:16px" viewBox="0 0 16 16" fill="none" stroke="currentColor" stroke-width="1.150"><path d="M5.200 3.400 9.800 8l-4.600 4.600"/></svg><svg class="fi" style="left:34px" viewBox="0 0 32 32"><path d="M13.844 7.536l-1.288-1.072A2 2 0 0 0 11.276 6H4a2 2 0 0 0-2 2v16a2 2 0 0 0 2 2h24a2 2 0 0 0 2-2V10a2 2 0 0 0-2-2H15.124a2 2 0 0 1-1.280-.464z" fill="#546e7a"/><path d="M19 13.500h12.500v3h-2.500v11.500a2.500 2.500 0 0 1-2.500 2.500H17.500a2.500 2.500 0 0 1-2.500-2.500v-1.500h2.500v-11a2 2 0 0 1 1.500-2zm1.500 3v10h6.500v-10z" fill="#eceff1" stroke="#181818" stroke-width="0.700" paint-order="stroke" stroke-linejoin="round"/></svg><span class="lb" style="letter-spacing:-0.01px;left:56px">scripts</span></div>
<div class="row" style="top:695px"><svg class="fi" style="left:34px" viewBox="0 0 32 32"><path d="M16 3 29 16 16 29 3 16z" fill="#e64a19" stroke="#e64a19" stroke-width="4" stroke-linejoin="round"/><g fill="#2a120a"><circle cx="13.500" cy="11.500" r="2.700"/><circle cx="13.500" cy="23" r="2.700"/><circle cx="21" cy="17" r="2.700"/></g><path d="M13.500 11.500v11.500M13.500 11.500l7.500 5.500M10.500 6.500l3 4" fill="none" stroke="#2a120a" stroke-width="2.600"/></svg><span class="lb" style="letter-spacing:0.06px;left:56px">.forceignore</span></div>
<div class="row" style="top:717px"><svg class="fi" style="left:34px" viewBox="0 0 32 32"><path d="M16 3 29 16 16 29 3 16z" fill="#e64a19" stroke="#e64a19" stroke-width="4" stroke-linejoin="round"/><g fill="#2a120a"><circle cx="13.500" cy="11.500" r="2.700"/><circle cx="13.500" cy="23" r="2.700"/><circle cx="21" cy="17" r="2.700"/></g><path d="M13.500 11.500v11.500M13.500 11.500l7.500 5.500M10.500 6.500l3 4" fill="none" stroke="#2a120a" stroke-width="2.600"/></svg><span class="lb" style="letter-spacing:0.23px;left:56px">.gitignore</span></div>
<div class="row" style="top:739px"><svg class="fi" style="left:34px" viewBox="0 0 32 32"><g stroke-width="2" fill="none"><path d="M3 3.5h10" stroke="#56b3b4"/><path d="M15 3.5h10" stroke="#ea5e5e"/><path d="M3 7.1h6" stroke="#bf85bf"/><path d="M11 7.1h4" stroke="#ea5e5e"/><path d="M21 7.1h7" stroke="#f7ba3e"/><path d="M3 10.7h4" stroke="#f7ba3e"/><path d="M9 10.7h5" stroke="#56b3b4"/><path d="M23 10.7h6" stroke="#56b3b4"/><path d="M3 14.3h7" stroke="#ea5e5e"/><path d="M12 14.3h4" stroke="#f7ba3e"/><path d="M21 14.3h7" stroke="#bf85bf"/><path d="M3 17.9h11" stroke="#56b3b4"/><path d="M16 17.9h9" stroke="#f7ba3e"/><path d="M3 21.5h5" stroke="#bf85bf"/><path d="M10 21.5h7" stroke="#ea5e5e"/><path d="M3 25.1h9" stroke="#f7ba3e"/><path d="M3 28.7h6" stroke="#ea5e5e"/></g></svg><span class="lb" style="letter-spacing:0.16px;left:56px">.prettierignore</span></div>
<div class="row" style="top:761px"><svg class="fi" style="left:34px" viewBox="0 0 32 32"><g stroke-width="2" fill="none"><path d="M3 3.5h10" stroke="#56b3b4"/><path d="M15 3.5h10" stroke="#ea5e5e"/><path d="M3 7.1h6" stroke="#bf85bf"/><path d="M11 7.1h4" stroke="#ea5e5e"/><path d="M21 7.1h7" stroke="#f7ba3e"/><path d="M3 10.7h4" stroke="#f7ba3e"/><path d="M9 10.7h5" stroke="#56b3b4"/><path d="M23 10.7h6" stroke="#56b3b4"/><path d="M3 14.3h7" stroke="#ea5e5e"/><path d="M12 14.3h4" stroke="#f7ba3e"/><path d="M21 14.3h7" stroke="#bf85bf"/><path d="M3 17.9h11" stroke="#56b3b4"/><path d="M16 17.9h9" stroke="#f7ba3e"/><path d="M3 21.5h5" stroke="#bf85bf"/><path d="M10 21.5h7" stroke="#ea5e5e"/><path d="M3 25.1h9" stroke="#f7ba3e"/><path d="M3 28.7h6" stroke="#ea5e5e"/></g></svg><span class="lb" style="letter-spacing:0.11px;left:56px">.prettierrc</span></div>
<div class="row" style="top:783px"><svg class="fi" style="left:34px" viewBox="0 0 32 32"><path d="M9 3.500h14l7 12.500-7 12.500H9L2 16z" fill="#5c6bc0" stroke="#5c6bc0" stroke-width="2" stroke-linejoin="round"/><path d="M12 9.500h8l4 6.500-4 6.500h-8L8 16z" fill="#9fa8da" stroke="#9fa8da" stroke-width="1.500" stroke-linejoin="round"/></svg><span class="lb" style="letter-spacing:-0.04px;left:56px">eslint.config.js</span></div>
<div class="row" style="top:805px"><svg class="fi" style="left:34px" viewBox="0 0 32 32"><path d="M16 3h14l-4.500 12h-5z" fill="#f4511e"/><path d="M23 13c3 2 2.500 6.500-1.500 8.500-4 2-9 3.500-13 6.500" fill="none" stroke="#f4511e" stroke-width="5" stroke-linecap="round"/><circle cx="6.500" cy="14.500" r="3.600" fill="#f4511e"/><path d="M8 17c2 1 3 3 2.500 6" fill="none" stroke="#f4511e" stroke-width="2.500"/><g fill="#181818"><circle cx="23" cy="6" r="1.400"/><circle cx="20.800" cy="10" r="1.400"/><circle cx="25.200" cy="10" r="1.400"/></g></svg><span class="lb" style="letter-spacing:-0.07px;left:56px">jest.config.js</span></div>
<div class="row" style="top:827px"><svg class="fi" style="left:34px" viewBox="0 0 32 32"><path d="M16 2.800 27.500 9.400v13.200L16 29.200 4.500 22.600V9.400z" fill="none" stroke="#8bc34a" stroke-width="2.200" stroke-linejoin="round"/><path d="M13.200 11v9.200c0 1.800-2.600 1.800-3.400.6M22.500 12.800c-1-1.600-5.500-1.700-5.500.9 0 2.800 5.700 1.400 5.700 4.400 0 2.600-4.800 2.500-6 .6" fill="none" stroke="#8bc34a" stroke-width="2"/></svg><span class="lb" style="letter-spacing:-0.17px;left:56px">package.json</span></div>
<div class="row" style="top:849px"><svg class="fi" style="left:34px" viewBox="0 0 32 32"><circle cx="16" cy="16" r="13.500" fill="#42a5f5"/><rect x="14.300" y="14" width="3.400" height="9.500" fill="#0e2740"/><rect x="14.300" y="8.500" width="3.400" height="3.400" fill="#0e2740"/></svg><span class="lb" style="letter-spacing:-0.63px;left:56px">README.md</span></div>
<div class="row" style="top:871px"><svg class="fi" style="left:34px" viewBox="0 0 32 32"><path d="M13.500 7H12a3.500 3.500 0 0 0-3.500 3.500V13a3 3 0 0 1-4.500 3 3 3 0 0 1 4.500 3v2.500A3.500 3.500 0 0 0 12 25h1.500M18.500 7H20a3.500 3.500 0 0 1 3.500 3.500V13a3 3 0 0 0 4.500 3 3 3 0 0 0-4.500 3v2.500A3.500 3.500 0 0 1 20 25h-1.500" fill="none" stroke="#f9a825" stroke-width="3"/></svg><span class="lb" style="letter-spacing:0.08px;left:56px">sfdx-project.json</span></div>
<div class="abs" style="left:36px;top:409px;width:1px;height:110px;background:#585858"></div>
<div class="ph" style="top:917px"><svg class="ch" style="top:3.500px;left:2.500px" viewBox="0 0 16 16" fill="none" stroke="currentColor" stroke-width="1.150"><path d="M5.200 3.400 9.800 8l-4.600 4.600"/></svg><span class="lb" style="transform-origin:0 50%;transform:scaleX(0.963);top:5px;">OUTLINE</span></div>
<div class="ph" style="top:939px"><svg class="ch" style="top:3.500px;left:2.500px" viewBox="0 0 16 16" fill="none" stroke="currentColor" stroke-width="1.150"><path d="M5.200 3.400 9.800 8l-4.600 4.600"/></svg><span class="lb" style="transform-origin:0 50%;transform:scaleX(0.984);top:5px;">TIMELINE</span></div>
<div class="ph" style="top:961px"><svg class="ch" style="top:3.500px;left:2.500px" viewBox="0 0 16 16" fill="none" stroke="currentColor" stroke-width="1.150"><path d="M5.200 3.400 9.800 8l-4.600 4.600"/></svg><span class="lb" style="transform-origin:0 50%;transform:scaleX(0.974);top:5px;">RUNNING TASKS</span></div>
</div>

<div id="editor">
<div id="tabs">
<div class="tab" style="left:0px;width:228px"><svg class="fi" style="left:10px" viewBox="0 0 32 32"><path transform="translate(1.800,1.600) scale(.89)" d="M13.300 7.800a5.300 5.300 0 0 1 3.900-1.700c2 0 3.800 1.100 4.700 2.800a6.400 6.400 0 0 1 2.700-.600c3.600 0 6.600 3 6.600 6.700s-3 6.700-6.600 6.700c-.500 0-.900 0-1.300-.100a4.800 4.800 0 0 1-6.300 2 5.500 5.500 0 0 1-10.300-.300 5 5 0 0 1-1 .100c-2.800 0-5.100-2.300-5.100-5.200 0-1.900 1-3.600 2.600-4.500a6 6 0 0 1-.500-2.400c0-3.300 2.700-6 6-6 1.900 0 3.600.900 4.600 2.500z" fill="#00a1e0"/></svg><span class="lb" style="letter-spacing:-0.09px;left:32px;color:#d0aa20">StripePaymentController.cls</span><span class="lb" style="left:194px;color:#d0aa20">1</span></div>
<div class="tab" style="left:228px;width:154px"><svg class="fi" style="left:10px" viewBox="0 0 32 32"><rect x="4" y="4" width="24" height="24" fill="#ffca28"/><text x="27.200" y="26.800" font-family="Liberation Sans,sans-serif" font-weight="bold" font-size="15" text-anchor="end" fill="#1f1803" stroke="#1f1803" stroke-width=".9" textLength="16" lengthAdjust="spacingAndGlyphs">JS</text></svg><span class="lb" style="letter-spacing:-0.19px;left:32px">stripePayment.js</span></div>
<div class="tab" style="left:382px;width:211px"><svg class="fi" style="left:10px" viewBox="0 0 32 32"><path d="M9 2h10l7 7v18a3 3 0 0 1-3 3H9a3 3 0 0 1-3-3V5a3 3 0 0 1 3-3z" fill="#8bc34a"/><path d="M18 3.500V10h6.500z" fill="#1b2a10"/><path d="M13.800 15l-4.800 5 4.800 5M18.200 15l4.800 5-4.800 5" fill="none" stroke="#1b2a10" stroke-width="3"/></svg><span class="lb" style="letter-spacing:-0.13px;left:32px">stripePayment.js-meta.xml</span></div>
<div class="tab act" style="left:593px;width:172px"><svg class="fi" style="left:10px" viewBox="0 0 32 32"><path d="M4 3h24l-2.200 23.300L16 29.500l-9.800-3.200z" fill="#e65100"/><path d="M7.300 6h17.400l-1.700 18L16 26.300 9 24z" fill="#4a230e"/><path d="M10.500 9h11.300l-.3 3.200h-7.700l.3 3h7.100l-.7 7.300L16 23.800l-4.500-1.300-.3-3.300h3l.1 1.100 1.700.5 1.700-.5.200-2.600h-6.700z" fill="#e65100"/></svg><span class="lb" style="letter-spacing:-0.07px;left:32px">stripePayment.html</span><svg class="abs" style="left:149px;top:9px" width="16" height="16" viewBox="0 0 16 16" fill="none" stroke="#fff" stroke-width="1.200"><path d="M3.600 3.600l8.800 8.800M12.400 3.600l-8.800 8.800"/></svg></div>
<div class="tab" style="left:765px;width:162px"><svg class="fi" style="left:10px" viewBox="0 0 32 32"><rect x="4" y="4" width="24" height="24" rx="3.500" fill="#7e57c2"/><text x="16.500" y="26.800" font-family="Liberation Sans,sans-serif" font-weight="bold" font-size="14.500" text-anchor="middle" fill="#140b2c" stroke="#140b2c" stroke-width=".9" textLength="21" lengthAdjust="spacingAndGlyphs">CSS</text></svg><span class="lb" style="letter-spacing:-0.31px;left:32px">stripePayment.css</span></div>
<svg class="abs" style="left:1376px;top:10px" width="17" height="17" viewBox="0 0 17 17" fill="none" stroke="#ccc" stroke-width="1.200" stroke-linejoin="round"><path d="M3.500 2.500h6M5 2.500v4.500L1.600 14c-.3.700.1 1.400.9 1.400h8c.8 0 1.200-.7.900-1.400L8 7V2.500M3.400 11h6.200"/><path d="M13.600 1.200c.3 1.700.9 2.300 2.600 2.600-1.700.3-2.300.9-2.600 2.600-.3-1.700-.9-2.300-2.600-2.600 1.700-.3 2.300-.9 2.600-2.600z" fill="#ccc" stroke="none"/></svg>
<svg class="abs" style="left:1403px;top:10px" width="16" height="16" viewBox="0 0 16 16" fill="none" stroke="#ccc" stroke-width="1.100"><rect x="1.500" y="2" width="13" height="12"/><path d="M8 2v12"/></svg>
<svg class="abs" style="left:1429px;top:10px" width="16" height="16" viewBox="0 0 16 16" fill="#ccc"><circle cx="3" cy="8" r="1.150"/><circle cx="8" cy="8" r="1.150"/><circle cx="13" cy="8" r="1.150"/></svg>
</div>
<div id="crumbs">
<span class="c" style="letter-spacing:0.23px;left:16px">force-app</span>
<svg class="sep" style="left:73px" viewBox="0 0 16 16" fill="none" stroke="currentColor" stroke-width="1.100"><path d="M5.800 3 10.800 8l-5 5"/></svg>
<span class="c" style="letter-spacing:0.20px;left:88px">main</span>
<svg class="sep" style="left:117px" viewBox="0 0 16 16" fill="none" stroke="currentColor" stroke-width="1.100"><path d="M5.800 3 10.800 8l-5 5"/></svg>
<span class="c" style="letter-spacing:0.14px;left:133px">default</span>
<svg class="sep" style="left:173px" viewBox="0 0 16 16" fill="none" stroke="currentColor" stroke-width="1.100"><path d="M5.800 3 10.800 8l-5 5"/></svg>
<span class="c" style="letter-spacing:0.41px;left:188px">lwc</span>
<svg class="sep" style="left:208px" viewBox="0 0 16 16" fill="none" stroke="currentColor" stroke-width="1.100"><path d="M5.800 3 10.800 8l-5 5"/></svg>
<span class="c" style="letter-spacing:-0.01px;left:223px">stripePayment</span>
<svg class="sep" style="left:306px" viewBox="0 0 16 16" fill="none" stroke="currentColor" stroke-width="1.100"><path d="M5.800 3 10.800 8l-5 5"/></svg>
<svg class="fi" style="left:321px" viewBox="0 0 32 32"><path d="M4 3h24l-2.200 23.300L16 29.500l-9.800-3.200z" fill="#e65100"/><path d="M7.300 6h17.400l-1.700 18L16 26.300 9 24z" fill="#4a230e"/><path d="M10.500 9h11.300l-.3 3.200h-7.700l.3 3h7.100l-.7 7.300L16 23.800l-4.500-1.300-.3-3.300h3l.1 1.100 1.700.5 1.700-.5.200-2.600h-6.700z" fill="#e65100"/></svg>
<span class="c" style="letter-spacing:-0.01px;left:343px">stripePayment.html</span>
<svg class="sep" style="left:454px" viewBox="0 0 16 16" fill="none" stroke="currentColor" stroke-width="1.100"><path d="M5.800 3 10.800 8l-5 5"/></svg>
<svg class="fi" style="left:469px" viewBox="0 0 16 16" fill="none" stroke="#75beff" stroke-width="1.100" stroke-linejoin="round"><path d="M9 2.200 1.500 6v4.900l5.400 2.900 7.600-3.800V5.100zM1.500 6 7 8.500l7.500-3.400M7 8.500v5.300"/></svg>
<span class="c" style="letter-spacing:0.27px;left:488px">template</span>
<svg class="sep" style="left:540px" viewBox="0 0 16 16" fill="none" stroke="currentColor" stroke-width="1.100"><path d="M5.800 3 10.800 8l-5 5"/></svg>
<svg class="fi" style="left:555px" viewBox="0 0 16 16" fill="none" stroke="#75beff" stroke-width="1.100" stroke-linejoin="round"><path d="M9 2.200 1.500 6v4.900l5.400 2.900 7.600-3.800V5.100zM1.500 6 7 8.500l7.500-3.400M7 8.500v5.300"/></svg>
<span class="c" style="letter-spacing:0.35px;left:574px">lightning-card</span>
<svg class="sep" style="left:657px" viewBox="0 0 16 16" fill="none" stroke="currentColor" stroke-width="1.100"><path d="M5.800 3 10.800 8l-5 5"/></svg>
<svg class="fi" style="left:672px" viewBox="0 0 16 16" fill="none" stroke="#75beff" stroke-width="1.100" stroke-linejoin="round"><path d="M9 2.200 1.500 6v4.900l5.400 2.900 7.600-3.800V5.100zM1.500 6 7 8.500l7.500-3.400M7 8.500v5.300"/></svg>
<span class="c" style="letter-spacing:0.12px;left:690px">div.slds-p-around_medium</span>
<svg class="sep" style="left:845px" viewBox="0 0 16 16" fill="none" stroke="currentColor" stroke-width="1.100"><path d="M5.800 3 10.800 8l-5 5"/></svg>
<svg class="fi" style="left:860px" viewBox="0 0 16 16" fill="none" stroke="#75beff" stroke-width="1.100" stroke-linejoin="round"><path d="M9 2.200 1.500 6v4.900l5.400 2.900 7.600-3.800V5.100zM1.500 6 7 8.500l7.500-3.400M7 8.500v5.300"/></svg>
<span class="c" style="letter-spacing:0.07px;left:879px">div.slds-grid.slds-gutters</span>
<svg class="sep" style="left:1020px" viewBox="0 0 16 16" fill="none" stroke="currentColor" stroke-width="1.100"><path d="M5.800 3 10.800 8l-5 5"/></svg>
<svg class="fi" style="left:1035px" viewBox="0 0 16 16" fill="none" stroke="#75beff" stroke-width="1.100" stroke-linejoin="round"><path d="M9 2.200 1.500 6v4.900l5.400 2.900 7.600-3.800V5.100zM1.500 6 7 8.500l7.500-3.400M7 8.500v5.300"/></svg>
<span class="c" style="letter-spacing:0.05px;left:1055px">div.slds-col</span>
<svg class="sep" style="left:1119px" viewBox="0 0 16 16" fill="none" stroke="currentColor" stroke-width="1.100"><path d="M5.800 3 10.800 8l-5 5"/></svg>
<svg class="fi" style="left:1134px" viewBox="0 0 16 16" fill="none" stroke="#75beff" stroke-width="1.100" stroke-linejoin="round"><path d="M9 2.200 1.500 6v4.900l5.400 2.900 7.600-3.800V5.100zM1.500 6 7 8.500l7.500-3.400M7 8.500v5.300"/></svg>
<span class="c" style="letter-spacing:0.06px;left:1153px">lightning-input.{nameInputClass}</span>
</div>
<div id="code">
<div class="abs" style="left:69px;top:228px;width:1257px;height:19px;border-top:1px solid #2e2e2e;border-bottom:1px solid #2e2e2e"></div>
<div class="g" style="left:68.0px;top:19px;height:608px"></div>
<div class="g" style="left:98.8px;top:38px;height:589px"></div>
<div class="g" style="left:129.6px;top:57px;height:570px"></div>
<div class="g" style="left:160.4px;top:76px;height:551px"></div>
<div class="g" style="left:191.2px;top:95px;height:247px"></div>
<div class="g" style="left:191.2px;top:380px;height:247px"></div>
<div class="g a" style="left:222.0px;top:114px;height:152px"></div>
<div class="g" style="left:222.0px;top:304px;height:19px"></div>
<div class="g" style="left:222.0px;top:399px;height:152px"></div>
<div class="g" style="left:222.0px;top:589px;height:19px"></div>
<div class="nu" style="top:0px">1</div><div class="cl" style="top:0px"><span class="p">&lt;</span><span class="n">template</span><span class="p">&gt;</span></div>
<div class="nu" style="top:19px">2</div><div class="cl" style="top:19px">    <span class="p">&lt;</span><span class="n">lightning-card</span> <span class="a">title</span><span class="w">=</span><span class="s">"Stripe Payment"</span><span class="p">&gt;</span></div>
<div class="nu" style="top:38px">3</div><div class="cl" style="top:38px">        <span class="p">&lt;</span><span class="n">div</span> <span class="a">class</span><span class="w">=</span><span class="s">"slds-p-around_medium"</span><span class="p">&gt;</span></div>
<div class="nu" style="top:57px">4</div><div class="cl" style="top:57px">            <span class="p">&lt;</span><span class="n">div</span> <span class="a">class</span><span class="w">=</span><span class="s">"slds-grid slds-gutters"</span><span class="p">&gt;</span></div>
<div class="nu" style="top:76px">5</div><div class="cl" style="top:76px">                <span class="p">&lt;</span><span class="n">div</span> <span class="a">class</span><span class="w">=</span><span class="s">"slds-col"</span><span class="p">&gt;</span></div>
<div class="nu" style="top:95px">6</div><div class="cl" style="top:95px">                    <span class="p">&lt;</span><span class="n">lightning-input</span></div>
<div class="nu" style="top:114px">7</div><div class="cl" style="top:114px">                        <span class="a">type</span><span class="w">=</span><span class="s">"text"</span></div>
<div class="nu" style="top:133px">8</div><div class="cl" style="top:133px">                        <span class="a">name</span><span class="w">=</span><span class="s">"name"</span></div>
<div class="nu" style="top:152px">9</div><div class="cl" style="top:152px">                        <span class="a">label</span><span class="w">=</span><span class="s">"Customer Name"</span></div>
<div class="nu" style="top:171px">10</div><div class="cl" style="top:171px">                        <span class="a">value</span><span class="w">=</span><span class="s">{customer.name}</span></div>
<div class="nu" style="top:190px">11</div><div class="cl" style="top:190px">                        <span class="a">onchange</span><span class="w">=</span><span class="s">{</span><span class="a">handleInputChange</span><span class="s">}</span></div>
<div class="nu" style="top:209px">12</div><div class="cl" style="top:209px">                        <span class="a">required</span></div>
<div class="nu cur" style="top:228px">13</div><div class="cl" style="top:228px">                        <span class="a">message-when-value-missing</span><span class="w">=</span><span class="s">"Name is required"</span></div>
<div class="nu" style="top:247px">14</div><div class="cl" style="top:247px">                        <span class="a">class</span><span class="w">=</span><span class="s">{nameInputClass}</span></div>
<div class="nu" style="top:266px">15</div><div class="cl" style="top:266px">                    <span class="p">&gt;</span><span class="p">&lt;/</span><span class="n">lightning-input</span><span class="p">&gt;</span></div>
<div class="nu" style="top:285px">16</div><div class="cl" style="top:285px">                    <span class="p">&lt;</span><span class="n">template</span> <span class="a">if:true</span><span class="w">=</span><span class="s">{formErrors.name}</span><span class="p">&gt;</span></div>
<div class="nu" style="top:304px">17</div><div class="cl" style="top:304px">                        <span class="p">&lt;</span><span class="n">div</span> <span class="a">class</span><span class="w">=</span><span class="s">"slds-form-element__help"</span><span class="p">&gt;</span><span class="w">{formErrors.name}</span><span class="p">&lt;/</span><span class="n">div</span><span class="p">&gt;</span></div>
<div class="nu" style="top:323px">18</div><div class="cl" style="top:323px">                    <span class="p">&lt;/</span><span class="n">template</span><span class="p">&gt;</span></div>
<div class="nu" style="top:342px">19</div><div class="cl" style="top:342px">                <span class="p">&lt;/</span><span class="n">div</span><span class="p">&gt;</span></div>
<div class="nu" style="top:361px">20</div><div class="cl" style="top:361px">                <span class="p">&lt;</span><span class="n">div</span> <span class="a">class</span><span class="w">=</span><span class="s">"slds-col"</span><span class="p">&gt;</span></div>
<div class="nu" style="top:380px">21</div><div class="cl" style="top:380px">                    <span class="p">&lt;</span><span class="n">lightning-input</span></div>
<div class="nu" style="top:399px">22</div><div class="cl" style="top:399px">                        <span class="a">type</span><span class="w">=</span><span class="s">"email"</span></div>
<div class="nu" style="top:418px">23</div><div class="cl" style="top:418px">                        <span class="a">name</span><span class="w">=</span><span class="s">"email"</span></div>
<div class="nu" style="top:437px">24</div><div class="cl" style="top:437px">                        <span class="a">label</span><span class="w">=</span><span class="s">"Customer Email"</span></div>
<div class="nu" style="top:456px">25</div><div class="cl" style="top:456px">                        <span class="a">value</span><span class="w">=</span><span class="s">{customer.email}</span></div>
<div class="nu" style="top:475px">26</div><div class="cl" style="top:475px">                        <span class="a">onchange</span><span class="w">=</span><span class="s">{</span><span class="a">handleInputChange</span><span class="s">}</span></div>
<div class="nu" style="top:494px">27</div><div class="cl" style="top:494px">                        <span class="a">required</span></div>
<div class="nu" style="top:513px">28</div><div class="cl" style="top:513px">                        <span class="a">message-when-value-missing</span><span class="w">=</span><span class="s">"Email is required"</span></div>
<div class="nu" style="top:532px">29</div><div class="cl" style="top:532px">                        <span class="a">class</span><span class="w">=</span><span class="s">{emailInputClass}</span></div>
<div class="nu" style="top:551px">30</div><div class="cl" style="top:551px">                    <span class="p">&gt;</span><span class="p">&lt;/</span><span class="n">lightning-input</span><span class="p">&gt;</span></div>
<div class="nu" style="top:570px">31</div><div class="cl" style="top:570px">                    <span class="p">&lt;</span><span class="n">template</span> <span class="a">if:true</span><span class="w">=</span><span class="s">{formErrors.email}</span><span class="p">&gt;</span></div>
<div class="nu" style="top:589px">32</div><div class="cl" style="top:589px">                        <span class="p">&lt;</span><span class="n">div</span> <span class="a">class</span><span class="w">=</span><span class="s">"slds-form-element__help"</span><span class="p">&gt;</span><span class="w">{formErrors.email}</span><span class="p">&lt;/</span><span class="n">div</span><span class="p">&gt;</span></div>
<div class="nu" style="top:608px">33</div><div class="cl" style="top:608px">                    <span class="p">&lt;/</span><span class="n">template</span><span class="p">&gt;</span></div>
<svg class="abs" style="left:1333px;top:0" width="110" height="160" viewBox="0 0 110 160" shape-rendering="crispEdges"><rect x="0.0" y="0.5" width="0.9" height="1.100" fill="#808080" opacity="0.480"/><rect x="0.9" y="0.5" width="7.4" height="1.100" fill="#569cd6" opacity="0.480"/><rect x="8.4" y="0.5" width="0.9" height="1.100" fill="#808080" opacity="0.480"/><rect x="3.7" y="2.5" width="0.9" height="1.100" fill="#808080" opacity="0.480"/><rect x="4.7" y="2.5" width="13.0" height="1.100" fill="#569cd6" opacity="0.480"/><rect x="18.6" y="2.5" width="4.7" height="1.100" fill="#9cdcfe" opacity="0.480"/><rect x="23.2" y="2.5" width="0.9" height="1.100" fill="#d4d4d4" opacity="0.480"/><rect x="24.2" y="2.5" width="14.9" height="1.100" fill="#ce9178" opacity="0.480"/><rect x="39.1" y="2.5" width="0.9" height="1.100" fill="#808080" opacity="0.480"/><rect x="7.4" y="4.5" width="0.9" height="1.100" fill="#808080" opacity="0.480"/><rect x="8.4" y="4.5" width="2.8" height="1.100" fill="#569cd6" opacity="0.480"/><rect x="12.1" y="4.5" width="4.7" height="1.100" fill="#9cdcfe" opacity="0.480"/><rect x="16.7" y="4.5" width="0.9" height="1.100" fill="#d4d4d4" opacity="0.480"/><rect x="17.7" y="4.5" width="20.5" height="1.100" fill="#ce9178" opacity="0.480"/><rect x="38.1" y="4.5" width="0.9" height="1.100" fill="#808080" opacity="0.480"/><rect x="11.2" y="6.5" width="0.9" height="1.100" fill="#808080" opacity="0.480"/><rect x="12.1" y="6.5" width="2.8" height="1.100" fill="#569cd6" opacity="0.480"/><rect x="15.8" y="6.5" width="4.7" height="1.100" fill="#9cdcfe" opacity="0.480"/><rect x="20.5" y="6.5" width="0.9" height="1.100" fill="#d4d4d4" opacity="0.480"/><rect x="21.4" y="6.5" width="22.3" height="1.100" fill="#ce9178" opacity="0.480"/><rect x="43.7" y="6.5" width="0.9" height="1.100" fill="#808080" opacity="0.480"/><rect x="14.9" y="8.5" width="0.9" height="1.100" fill="#808080" opacity="0.480"/><rect x="15.8" y="8.5" width="2.8" height="1.100" fill="#569cd6" opacity="0.480"/><rect x="19.5" y="8.5" width="4.7" height="1.100" fill="#9cdcfe" opacity="0.480"/><rect x="24.2" y="8.5" width="0.9" height="1.100" fill="#d4d4d4" opacity="0.480"/><rect x="25.1" y="8.5" width="9.3" height="1.100" fill="#ce9178" opacity="0.480"/><rect x="34.4" y="8.5" width="0.9" height="1.100" fill="#808080" opacity="0.480"/><rect x="18.6" y="10.5" width="0.9" height="1.100" fill="#808080" opacity="0.480"/><rect x="19.5" y="10.5" width="14.0" height="1.100" fill="#569cd6" opacity="0.480"/><rect x="22.3" y="12.5" width="3.7" height="1.100" fill="#9cdcfe" opacity="0.480"/><rect x="26.0" y="12.5" width="0.9" height="1.100" fill="#d4d4d4" opacity="0.480"/><rect x="27.0" y="12.5" width="5.6" height="1.100" fill="#ce9178" opacity="0.480"/><rect x="22.3" y="14.5" width="3.7" height="1.100" fill="#9cdcfe" opacity="0.480"/><rect x="26.0" y="14.5" width="0.9" height="1.100" fill="#d4d4d4" opacity="0.480"/><rect x="27.0" y="14.5" width="5.6" height="1.100" fill="#ce9178" opacity="0.480"/><rect x="22.3" y="16.5" width="4.7" height="1.100" fill="#9cdcfe" opacity="0.480"/><rect x="27.0" y="16.5" width="0.9" height="1.100" fill="#d4d4d4" opacity="0.480"/><rect x="27.9" y="16.5" width="14.0" height="1.100" fill="#ce9178" opacity="0.480"/><rect x="22.3" y="18.5" width="4.7" height="1.100" fill="#9cdcfe" opacity="0.480"/><rect x="27.0" y="18.5" width="0.9" height="1.100" fill="#d4d4d4" opacity="0.480"/><rect x="27.9" y="18.5" width="14.0" height="1.100" fill="#ce9178" opacity="0.480"/><rect x="22.3" y="20.5" width="7.4" height="1.100" fill="#9cdcfe" opacity="0.480"/><rect x="29.8" y="20.5" width="0.9" height="1.100" fill="#d4d4d4" opacity="0.480"/><rect x="30.7" y="20.5" width="0.9" height="1.100" fill="#ce9178" opacity="0.480"/><rect x="31.6" y="20.5" width="15.8" height="1.100" fill="#9cdcfe" opacity="0.480"/><rect x="47.4" y="20.5" width="0.9" height="1.100" fill="#ce9178" opacity="0.480"/><rect x="22.3" y="22.5" width="7.4" height="1.100" fill="#9cdcfe" opacity="0.480"/><rect x="22.3" y="24.5" width="24.2" height="1.100" fill="#9cdcfe" opacity="0.480"/><rect x="46.5" y="24.5" width="0.9" height="1.100" fill="#d4d4d4" opacity="0.480"/><rect x="47.4" y="24.5" width="16.7" height="1.100" fill="#ce9178" opacity="0.480"/><rect x="22.3" y="26.5" width="4.7" height="1.100" fill="#9cdcfe" opacity="0.480"/><rect x="27.0" y="26.5" width="0.9" height="1.100" fill="#d4d4d4" opacity="0.480"/><rect x="27.9" y="26.5" width="14.9" height="1.100" fill="#ce9178" opacity="0.480"/><rect x="18.6" y="28.5" width="0.9" height="1.100" fill="#808080" opacity="0.480"/><rect x="19.5" y="28.5" width="1.9" height="1.100" fill="#808080" opacity="0.480"/><rect x="21.4" y="28.5" width="14.0" height="1.100" fill="#569cd6" opacity="0.480"/><rect x="35.3" y="28.5" width="0.9" height="1.100" fill="#808080" opacity="0.480"/><rect x="18.6" y="30.5" width="0.9" height="1.100" fill="#808080" opacity="0.480"/><rect x="19.5" y="30.5" width="7.4" height="1.100" fill="#569cd6" opacity="0.480"/><rect x="27.9" y="30.5" width="6.5" height="1.100" fill="#9cdcfe" opacity="0.480"/><rect x="34.4" y="30.5" width="0.9" height="1.100" fill="#d4d4d4" opacity="0.480"/><rect x="35.3" y="30.5" width="15.8" height="1.100" fill="#ce9178" opacity="0.480"/><rect x="51.2" y="30.5" width="0.9" height="1.100" fill="#808080" opacity="0.480"/><rect x="22.3" y="32.5" width="0.9" height="1.100" fill="#808080" opacity="0.480"/><rect x="23.2" y="32.5" width="2.8" height="1.100" fill="#569cd6" opacity="0.480"/><rect x="27.0" y="32.5" width="4.7" height="1.100" fill="#9cdcfe" opacity="0.480"/><rect x="31.6" y="32.5" width="0.9" height="1.100" fill="#d4d4d4" opacity="0.480"/><rect x="32.5" y="32.5" width="23.2" height="1.100" fill="#ce9178" opacity="0.480"/><rect x="55.8" y="32.5" width="0.9" height="1.100" fill="#808080" opacity="0.480"/><rect x="56.7" y="32.5" width="15.8" height="1.100" fill="#d4d4d4" opacity="0.480"/><rect x="72.5" y="32.5" width="1.9" height="1.100" fill="#808080" opacity="0.480"/><rect x="74.4" y="32.5" width="2.8" height="1.100" fill="#569cd6" opacity="0.480"/><rect x="77.2" y="32.5" width="0.9" height="1.100" fill="#808080" opacity="0.480"/><rect x="18.6" y="34.5" width="1.9" height="1.100" fill="#808080" opacity="0.480"/><rect x="20.5" y="34.5" width="7.4" height="1.100" fill="#569cd6" opacity="0.480"/><rect x="27.9" y="34.5" width="0.9" height="1.100" fill="#808080" opacity="0.480"/><rect x="14.9" y="36.5" width="1.9" height="1.100" fill="#808080" opacity="0.480"/><rect x="16.7" y="36.5" width="2.8" height="1.100" fill="#569cd6" opacity="0.480"/><rect x="19.5" y="36.5" width="0.9" height="1.100" fill="#808080" opacity="0.480"/><rect x="14.9" y="38.5" width="0.9" height="1.100" fill="#808080" opacity="0.480"/><rect x="15.8" y="38.5" width="2.8" height="1.100" fill="#569cd6" opacity="0.480"/><rect x="19.5" y="38.5" width="4.7" height="1.100" fill="#9cdcfe" opacity="0.480"/><rect x="24.2" y="38.5" width="0.9" height="1.100" fill="#d4d4d4" opacity="0.480"/><rect x="25.1" y="38.5" width="9.3" height="1.100" fill="#ce9178" opacity="0.480"/><rect x="34.4" y="38.5" width="0.9" height="1.100" fill="#808080" opacity="0.480"/><rect x="18.6" y="40.5" width="0.9" height="1.100" fill="#808080" opacity="0.480"/><rect x="19.5" y="40.5" width="14.0" height="1.100" fill="#569cd6" opacity="0.480"/><rect x="22.3" y="42.5" width="3.7" height="1.100" fill="#9cdcfe" opacity="0.480"/><rect x="26.0" y="42.5" width="0.9" height="1.100" fill="#d4d4d4" opacity="0.480"/><rect x="27.0" y="42.5" width="6.5" height="1.100" fill="#ce9178" opacity="0.480"/><rect x="22.3" y="44.5" width="3.7" height="1.100" fill="#9cdcfe" opacity="0.480"/><rect x="26.0" y="44.5" width="0.9" height="1.100" fill="#d4d4d4" opacity="0.480"/><rect x="27.0" y="44.5" width="6.5" height="1.100" fill="#ce9178" opacity="0.480"/><rect x="22.3" y="46.5" width="4.7" height="1.100" fill="#9cdcfe" opacity="0.480"/><rect x="27.0" y="46.5" width="0.9" height="1.100" fill="#d4d4d4" opacity="0.480"/><rect x="27.9" y="46.5" width="14.9" height="1.100" fill="#ce9178" opacity="0.480"/><rect x="22.3" y="48.5" width="4.7" height="1.100" fill="#9cdcfe" opacity="0.480"/><rect x="27.0" y="48.5" width="0.9" height="1.100" fill="#d4d4d4" opacity="0.480"/><rect x="27.9" y="48.5" width="14.9" height="1.100" fill="#ce9178" opacity="0.480"/><rect x="22.3" y="50.5" width="7.4" height="1.100" fill="#9cdcfe" opacity="0.480"/><rect x="29.8" y="50.5" width="0.9" height="1.100" fill="#d4d4d4" opacity="0.480"/><rect x="30.7" y="50.5" width="0.9" height="1.100" fill="#ce9178" opacity="0.480"/><rect x="31.6" y="50.5" width="15.8" height="1.100" fill="#9cdcfe" opacity="0.480"/><rect x="47.4" y="50.5" width="0.9" height="1.100" fill="#ce9178" opacity="0.480"/><rect x="22.3" y="52.5" width="7.4" height="1.100" fill="#9cdcfe" opacity="0.480"/><rect x="22.3" y="54.5" width="24.2" height="1.100" fill="#9cdcfe" opacity="0.480"/><rect x="46.5" y="54.5" width="0.9" height="1.100" fill="#d4d4d4" opacity="0.480"/><rect x="47.4" y="54.5" width="17.7" height="1.100" fill="#ce9178" opacity="0.480"/><rect x="22.3" y="56.5" width="4.7" height="1.100" fill="#9cdcfe" opacity="0.480"/><rect x="27.0" y="56.5" width="0.9" height="1.100" fill="#d4d4d4" opacity="0.480"/><rect x="27.9" y="56.5" width="15.8" height="1.100" fill="#ce9178" opacity="0.480"/><rect x="18.6" y="58.5" width="0.9" height="1.100" fill="#808080" opacity="0.480"/><rect x="19.5" y="58.5" width="1.9" height="1.100" fill="#808080" opacity="0.480"/><rect x="21.4" y="58.5" width="14.0" height="1.100" fill="#569cd6" opacity="0.480"/><rect x="35.3" y="58.5" width="0.9" height="1.100" fill="#808080" opacity="0.480"/><rect x="18.6" y="60.5" width="0.9" height="1.100" fill="#808080" opacity="0.480"/><rect x="19.5" y="60.5" width="7.4" height="1.100" fill="#569cd6" opacity="0.480"/><rect x="27.9" y="60.5" width="6.5" height="1.100" fill="#9cdcfe" opacity="0.480"/><rect x="34.4" y="60.5" width="0.9" height="1.100" fill="#d4d4d4" opacity="0.480"/><rect x="35.3" y="60.5" width="16.7" height="1.100" fill="#ce9178" opacity="0.480"/><rect x="52.1" y="60.5" width="0.9" height="1.100" fill="#808080" opacity="0.480"/><rect x="22.3" y="62.5" width="0.9" height="1.100" fill="#808080" opacity="0.480"/><rect x="23.2" y="62.5" width="2.8" height="1.100" fill="#569cd6" opacity="0.480"/><rect x="27.0" y="62.5" width="4.7" height="1.100" fill="#9cdcfe" opacity="0.480"/><rect x="31.6" y="62.5" width="0.9" height="1.100" fill="#d4d4d4" opacity="0.480"/><rect x="32.5" y="62.5" width="23.2" height="1.100" fill="#ce9178" opacity="0.480"/><rect x="55.8" y="62.5" width="0.9" height="1.100" fill="#808080" opacity="0.480"/><rect x="56.7" y="62.5" width="16.7" height="1.100" fill="#d4d4d4" opacity="0.480"/><rect x="73.5" y="62.5" width="1.9" height="1.100" fill="#808080" opacity="0.480"/><rect x="75.3" y="62.5" width="2.8" height="1.100" fill="#569cd6" opacity="0.480"/><rect x="78.1" y="62.5" width="0.9" height="1.100" fill="#808080" opacity="0.480"/><rect x="18.6" y="64.5" width="1.9" height="1.100" fill="#808080" opacity="0.480"/><rect x="20.5" y="64.5" width="7.4" height="1.100" fill="#569cd6" opacity="0.480"/><rect x="27.9" y="64.5" width="0.9" height="1.100" fill="#808080" opacity="0.480"/><rect x="14.9" y="66.5" width="1.9" height="1.100" fill="#808080" opacity="0.480"/><rect x="16.7" y="66.5" width="2.8" height="1.100" fill="#569cd6" opacity="0.480"/><rect x="19.5" y="66.5" width="0.9" height="1.100" fill="#808080" opacity="0.480"/><rect x="11.2" y="68.5" width="1.9" height="1.100" fill="#808080" opacity="0.480"/><rect x="13.0" y="68.5" width="2.8" height="1.100" fill="#569cd6" opacity="0.480"/><rect x="15.8" y="68.5" width="0.9" height="1.100" fill="#808080" opacity="0.480"/><rect x="11.2" y="70.5" width="0.9" height="1.100" fill="#808080" opacity="0.480"/><rect x="12.1" y="70.5" width="2.8" height="1.100" fill="#569cd6" opacity="0.480"/><rect x="15.8" y="70.5" width="4.7" height="1.100" fill="#9cdcfe" opacity="0.480"/><rect x="20.5" y="70.5" width="0.9" height="1.100" fill="#d4d4d4" opacity="0.480"/><rect x="21.4" y="70.5" width="39.1" height="1.100" fill="#ce9178" opacity="0.480"/><rect x="60.5" y="70.5" width="0.9" height="1.100" fill="#808080" opacity="0.480"/><rect x="14.9" y="72.5" width="0.9" height="1.100" fill="#808080" opacity="0.480"/><rect x="15.8" y="72.5" width="2.8" height="1.100" fill="#569cd6" opacity="0.480"/><rect x="19.5" y="72.5" width="4.7" height="1.100" fill="#9cdcfe" opacity="0.480"/><rect x="24.2" y="72.5" width="0.9" height="1.100" fill="#d4d4d4" opacity="0.480"/><rect x="25.1" y="72.5" width="9.3" height="1.100" fill="#ce9178" opacity="0.480"/><rect x="34.4" y="72.5" width="0.9" height="1.100" fill="#808080" opacity="0.480"/><rect x="18.6" y="74.5" width="0.9" height="1.100" fill="#808080" opacity="0.480"/><rect x="19.5" y="74.5" width="14.0" height="1.100" fill="#569cd6" opacity="0.480"/><rect x="22.3" y="76.5" width="3.7" height="1.100" fill="#9cdcfe" opacity="0.480"/><rect x="26.0" y="76.5" width="0.9" height="1.100" fill="#d4d4d4" opacity="0.480"/><rect x="27.0" y="76.5" width="7.4" height="1.100" fill="#ce9178" opacity="0.480"/><rect x="22.3" y="78.5" width="3.7" height="1.100" fill="#9cdcfe" opacity="0.480"/><rect x="26.0" y="78.5" width="0.9" height="1.100" fill="#d4d4d4" opacity="0.480"/><rect x="27.0" y="78.5" width="7.4" height="1.100" fill="#ce9178" opacity="0.480"/><rect x="22.3" y="80.5" width="4.7" height="1.100" fill="#9cdcfe" opacity="0.480"/><rect x="27.0" y="80.5" width="0.9" height="1.100" fill="#d4d4d4" opacity="0.480"/><rect x="27.9" y="80.5" width="13.0" height="1.100" fill="#ce9178" opacity="0.480"/><rect x="22.3" y="82.5" width="4.7" height="1.100" fill="#9cdcfe" opacity="0.480"/><rect x="27.0" y="82.5" width="0.9" height="1.100" fill="#d4d4d4" opacity="0.480"/><rect x="27.9" y="82.5" width="7.4" height="1.100" fill="#ce9178" opacity="0.480"/><rect x="22.3" y="84.5" width="7.4" height="1.100" fill="#9cdcfe" opacity="0.480"/><rect x="29.8" y="84.5" width="0.9" height="1.100" fill="#d4d4d4" opacity="0.480"/><rect x="30.7" y="84.5" width="0.9" height="1.100" fill="#ce9178" opacity="0.480"/><rect x="31.6" y="84.5" width="15.8" height="1.100" fill="#9cdcfe" opacity="0.480"/><rect x="47.4" y="84.5" width="0.9" height="1.100" fill="#ce9178" opacity="0.480"/><rect x="22.3" y="86.5" width="7.4" height="1.100" fill="#9cdcfe" opacity="0.480"/><rect x="22.3" y="88.5" width="24.2" height="1.100" fill="#9cdcfe" opacity="0.480"/><rect x="46.5" y="88.5" width="0.9" height="1.100" fill="#d4d4d4" opacity="0.480"/><rect x="47.4" y="88.5" width="18.6" height="1.100" fill="#ce9178" opacity="0.480"/><rect x="22.3" y="90.5" width="4.7" height="1.100" fill="#9cdcfe" opacity="0.480"/><rect x="27.0" y="90.5" width="0.9" height="1.100" fill="#d4d4d4" opacity="0.480"/><rect x="27.9" y="90.5" width="16.7" height="1.100" fill="#ce9178" opacity="0.480"/><rect x="22.3" y="92.5" width="2.8" height="1.100" fill="#9cdcfe" opacity="0.480"/><rect x="25.1" y="92.5" width="0.9" height="1.100" fill="#d4d4d4" opacity="0.480"/><rect x="26.0" y="92.5" width="5.6" height="1.100" fill="#ce9178" opacity="0.480"/><rect x="22.3" y="94.5" width="3.7" height="1.100" fill="#9cdcfe" opacity="0.480"/><rect x="26.0" y="94.5" width="0.9" height="1.100" fill="#d4d4d4" opacity="0.480"/><rect x="27.0" y="94.5" width="5.6" height="1.100" fill="#ce9178" opacity="0.480"/><rect x="18.6" y="96.5" width="0.9" height="1.100" fill="#808080" opacity="0.480"/><rect x="19.5" y="96.5" width="1.9" height="1.100" fill="#808080" opacity="0.480"/><rect x="21.4" y="96.5" width="14.0" height="1.100" fill="#569cd6" opacity="0.480"/><rect x="35.3" y="96.5" width="0.9" height="1.100" fill="#808080" opacity="0.480"/><rect x="18.6" y="98.5" width="0.9" height="1.100" fill="#808080" opacity="0.480"/><rect x="19.5" y="98.5" width="7.4" height="1.100" fill="#569cd6" opacity="0.480"/><rect x="27.9" y="98.5" width="6.5" height="1.100" fill="#9cdcfe" opacity="0.480"/><rect x="34.4" y="98.5" width="0.9" height="1.100" fill="#d4d4d4" opacity="0.480"/><rect x="35.3" y="98.5" width="17.7" height="1.100" fill="#ce9178" opacity="0.480"/><rect x="53.0" y="98.5" width="0.9" height="1.100" fill="#808080" opacity="0.480"/><rect x="22.3" y="100.5" width="0.9" height="1.100" fill="#808080" opacity="0.480"/><rect x="23.2" y="100.5" width="2.8" height="1.100" fill="#569cd6" opacity="0.480"/><rect x="27.0" y="100.5" width="4.7" height="1.100" fill="#9cdcfe" opacity="0.480"/><rect x="31.6" y="100.5" width="0.9" height="1.100" fill="#d4d4d4" opacity="0.480"/><rect x="32.5" y="100.5" width="23.2" height="1.100" fill="#ce9178" opacity="0.480"/><rect x="55.8" y="100.5" width="0.9" height="1.100" fill="#808080" opacity="0.480"/><rect x="56.7" y="100.5" width="17.7" height="1.100" fill="#d4d4d4" opacity="0.480"/><rect x="74.4" y="100.5" width="1.9" height="1.100" fill="#808080" opacity="0.480"/><rect x="76.3" y="100.5" width="2.8" height="1.100" fill="#569cd6" opacity="0.480"/><rect x="79.1" y="100.5" width="0.9" height="1.100" fill="#808080" opacity="0.480"/><rect x="18.6" y="102.5" width="1.9" height="1.100" fill="#808080" opacity="0.480"/><rect x="20.5" y="102.5" width="7.4" height="1.100" fill="#569cd6" opacity="0.480"/><rect x="27.9" y="102.5" width="0.9" height="1.100" fill="#808080" opacity="0.480"/><rect x="14.9" y="104.5" width="1.9" height="1.100" fill="#808080" opacity="0.480"/><rect x="16.7" y="104.5" width="2.8" height="1.100" fill="#569cd6" opacity="0.480"/><rect x="19.5" y="104.5" width="0.9" height="1.100" fill="#808080" opacity="0.480"/><rect x="11.2" y="106.5" width="1.9" height="1.100" fill="#808080" opacity="0.480"/><rect x="13.0" y="106.5" width="2.8" height="1.100" fill="#569cd6" opacity="0.480"/><rect x="15.8" y="106.5" width="0.9" height="1.100" fill="#808080" opacity="0.480"/><rect x="11.2" y="110.5" width="0.9" height="1.100" fill="#808080" opacity="0.480"/><rect x="12.1" y="110.5" width="2.8" height="1.100" fill="#569cd6" opacity="0.480"/><rect x="15.8" y="110.5" width="4.7" height="1.100" fill="#9cdcfe" opacity="0.480"/><rect x="20.5" y="110.5" width="0.9" height="1.100" fill="#d4d4d4" opacity="0.480"/><rect x="21.4" y="110.5" width="17.7" height="1.100" fill="#ce9178" opacity="0.480"/><rect x="40.0" y="110.5" width="6.5" height="1.100" fill="#9cdcfe" opacity="0.480"/><rect x="46.5" y="110.5" width="0.9" height="1.100" fill="#d4d4d4" opacity="0.480"/><rect x="47.4" y="110.5" width="7.4" height="1.100" fill="#ce9178" opacity="0.480"/><rect x="55.8" y="110.5" width="6.5" height="1.100" fill="#9cdcfe" opacity="0.480"/><rect x="62.3" y="110.5" width="0.9" height="1.100" fill="#d4d4d4" opacity="0.480"/><rect x="63.2" y="110.5" width="5.6" height="1.100" fill="#ce9178" opacity="0.480"/><rect x="68.8" y="110.5" width="0.9" height="1.100" fill="#808080" opacity="0.480"/><rect x="69.8" y="110.5" width="1.9" height="1.100" fill="#808080" opacity="0.480"/><rect x="71.6" y="110.5" width="2.8" height="1.100" fill="#569cd6" opacity="0.480"/><rect x="74.4" y="110.5" width="0.9" height="1.100" fill="#808080" opacity="0.480"/><rect x="11.2" y="114.5" width="0.9" height="1.100" fill="#808080" opacity="0.480"/><rect x="12.1" y="114.5" width="14.9" height="1.100" fill="#569cd6" opacity="0.480"/><rect x="14.9" y="116.5" width="4.7" height="1.100" fill="#9cdcfe" opacity="0.480"/><rect x="19.5" y="116.5" width="0.9" height="1.100" fill="#d4d4d4" opacity="0.480"/><rect x="20.5" y="116.5" width="8.4" height="1.100" fill="#ce9178" opacity="0.480"/><rect x="14.9" y="118.5" width="6.5" height="1.100" fill="#9cdcfe" opacity="0.480"/><rect x="21.4" y="118.5" width="0.9" height="1.100" fill="#d4d4d4" opacity="0.480"/><rect x="22.3" y="118.5" width="6.5" height="1.100" fill="#ce9178" opacity="0.480"/><rect x="14.9" y="120.5" width="6.5" height="1.100" fill="#9cdcfe" opacity="0.480"/><rect x="21.4" y="120.5" width="0.9" height="1.100" fill="#d4d4d4" opacity="0.480"/><rect x="22.3" y="120.5" width="0.9" height="1.100" fill="#ce9178" opacity="0.480"/><rect x="23.2" y="120.5" width="8.4" height="1.100" fill="#9cdcfe" opacity="0.480"/><rect x="31.6" y="120.5" width="0.9" height="1.100" fill="#ce9178" opacity="0.480"/><rect x="14.9" y="122.5" width="7.4" height="1.100" fill="#9cdcfe" opacity="0.480"/><rect x="22.3" y="122.5" width="0.9" height="1.100" fill="#d4d4d4" opacity="0.480"/><rect x="23.2" y="122.5" width="10.2" height="1.100" fill="#ce9178" opacity="0.480"/><rect x="11.2" y="124.5" width="0.9" height="1.100" fill="#808080" opacity="0.480"/><rect x="12.1" y="124.5" width="1.9" height="1.100" fill="#808080" opacity="0.480"/><rect x="13.9" y="124.5" width="14.9" height="1.100" fill="#569cd6" opacity="0.480"/><rect x="28.8" y="124.5" width="0.9" height="1.100" fill="#808080" opacity="0.480"/><rect x="11.2" y="128.5" width="0.9" height="1.100" fill="#808080" opacity="0.480"/><rect x="12.1" y="128.5" width="7.4" height="1.100" fill="#569cd6" opacity="0.480"/><rect x="20.5" y="128.5" width="6.5" height="1.100" fill="#9cdcfe" opacity="0.480"/><rect x="27.0" y="128.5" width="0.9" height="1.100" fill="#d4d4d4" opacity="0.480"/><rect x="27.9" y="128.5" width="10.2" height="1.100" fill="#ce9178" opacity="0.480"/><rect x="38.1" y="128.5" width="0.9" height="1.100" fill="#808080" opacity="0.480"/><rect x="14.9" y="130.5" width="0.9" height="1.100" fill="#808080" opacity="0.480"/><rect x="15.8" y="130.5" width="15.8" height="1.100" fill="#569cd6" opacity="0.480"/><rect x="32.6" y="130.5" width="14.9" height="1.100" fill="#9cdcfe" opacity="0.480"/><rect x="47.4" y="130.5" width="0.9" height="1.100" fill="#d4d4d4" opacity="0.480"/><rect x="48.4" y="130.5" width="11.2" height="1.100" fill="#ce9178" opacity="0.480"/><rect x="59.5" y="130.5" width="0.9" height="1.100" fill="#808080" opacity="0.480"/><rect x="60.5" y="130.5" width="1.9" height="1.100" fill="#808080" opacity="0.480"/><rect x="62.3" y="130.5" width="15.8" height="1.100" fill="#569cd6" opacity="0.480"/><rect x="78.1" y="130.5" width="0.9" height="1.100" fill="#808080" opacity="0.480"/><rect x="11.2" y="132.5" width="1.9" height="1.100" fill="#808080" opacity="0.480"/><rect x="13.0" y="132.5" width="7.4" height="1.100" fill="#569cd6" opacity="0.480"/><rect x="20.5" y="132.5" width="0.9" height="1.100" fill="#808080" opacity="0.480"/><rect x="11.2" y="134.5" width="0.9" height="1.100" fill="#808080" opacity="0.480"/><rect x="12.1" y="134.5" width="7.4" height="1.100" fill="#569cd6" opacity="0.480"/><rect x="20.5" y="134.5" width="6.5" height="1.100" fill="#9cdcfe" opacity="0.480"/><rect x="27.0" y="134.5" width="0.9" height="1.100" fill="#d4d4d4" opacity="0.480"/><rect x="27.9" y="134.5" width="14.9" height="1.100" fill="#ce9178" opacity="0.480"/><rect x="42.8" y="134.5" width="0.9" height="1.100" fill="#808080" opacity="0.480"/><rect x="14.9" y="136.5" width="0.9" height="1.100" fill="#808080" opacity="0.480"/><rect x="15.8" y="136.5" width="2.8" height="1.100" fill="#569cd6" opacity="0.480"/><rect x="19.5" y="136.5" width="4.7" height="1.100" fill="#9cdcfe" opacity="0.480"/><rect x="24.2" y="136.5" width="0.9" height="1.100" fill="#d4d4d4" opacity="0.480"/><rect x="25.1" y="136.5" width="23.2" height="1.100" fill="#ce9178" opacity="0.480"/><rect x="48.4" y="136.5" width="0.9" height="1.100" fill="#808080" opacity="0.480"/><rect x="49.3" y="136.5" width="28.8" height="1.100" fill="#d4d4d4" opacity="0.480"/><rect x="78.1" y="136.5" width="1.9" height="1.100" fill="#808080" opacity="0.480"/><rect x="80.0" y="136.5" width="2.8" height="1.100" fill="#569cd6" opacity="0.480"/><rect x="82.8" y="136.5" width="0.9" height="1.100" fill="#808080" opacity="0.480"/><rect x="11.2" y="138.5" width="1.9" height="1.100" fill="#808080" opacity="0.480"/><rect x="13.0" y="138.5" width="7.4" height="1.100" fill="#569cd6" opacity="0.480"/><rect x="20.5" y="138.5" width="0.9" height="1.100" fill="#808080" opacity="0.480"/><rect x="11.2" y="140.5" width="0.9" height="1.100" fill="#808080" opacity="0.480"/><rect x="12.1" y="140.5" width="7.4" height="1.100" fill="#569cd6" opacity="0.480"/><rect x="20.5" y="140.5" width="6.5" height="1.100" fill="#9cdcfe" opacity="0.480"/><rect x="27.0" y="140.5" width="0.9" height="1.100" fill="#d4d4d4" opacity="0.480"/><rect x="27.9" y="140.5" width="13.0" height="1.100" fill="#ce9178" opacity="0.480"/><rect x="40.9" y="140.5" width="0.9" height="1.100" fill="#808080" opacity="0.480"/><rect x="14.9" y="142.5" width="0.9" height="1.100" fill="#808080" opacity="0.480"/><rect x="15.8" y="142.5" width="2.8" height="1.100" fill="#569cd6" opacity="0.480"/><rect x="19.5" y="142.5" width="4.7" height="1.100" fill="#9cdcfe" opacity="0.480"/><rect x="24.2" y="142.5" width="0.9" height="1.100" fill="#d4d4d4" opacity="0.480"/><rect x="25.1" y="142.5" width="21.4" height="1.100" fill="#ce9178" opacity="0.480"/><rect x="46.5" y="142.5" width="0.9" height="1.100" fill="#808080" opacity="0.480"/><rect x="47.4" y="142.5" width="27.9" height="1.100" fill="#d4d4d4" opacity="0.480"/><rect x="75.3" y="142.5" width="1.9" height="1.100" fill="#808080" opacity="0.480"/><rect x="77.2" y="142.5" width="2.8" height="1.100" fill="#569cd6" opacity="0.480"/><rect x="80.0" y="142.5" width="0.9" height="1.100" fill="#808080" opacity="0.480"/><rect x="11.2" y="144.5" width="1.9" height="1.100" fill="#808080" opacity="0.480"/><rect x="13.0" y="144.5" width="7.4" height="1.100" fill="#569cd6" opacity="0.480"/><rect x="20.5" y="144.5" width="0.9" height="1.100" fill="#808080" opacity="0.480"/><rect x="11.2" y="146.5" width="0.9" height="1.100" fill="#808080" opacity="0.480"/><rect x="12.1" y="146.5" width="7.4" height="1.100" fill="#569cd6" opacity="0.480"/><rect x="20.5" y="146.5" width="6.5" height="1.100" fill="#9cdcfe" opacity="0.480"/><rect x="27.0" y="146.5" width="0.9" height="1.100" fill="#d4d4d4" opacity="0.480"/><rect x="27.9" y="146.5" width="6.5" height="1.100" fill="#ce9178" opacity="0.480"/><rect x="34.4" y="146.5" width="0.9" height="1.100" fill="#808080" opacity="0.480"/><rect x="14.9" y="148.5" width="0.9" height="1.100" fill="#808080" opacity="0.480"/><rect x="15.8" y="148.5" width="2.8" height="1.100" fill="#569cd6" opacity="0.480"/><rect x="19.5" y="148.5" width="4.7" height="1.100" fill="#9cdcfe" opacity="0.480"/><rect x="24.2" y="148.5" width="0.9" height="1.100" fill="#d4d4d4" opacity="0.480"/><rect x="25.1" y="148.5" width="20.5" height="1.100" fill="#ce9178" opacity="0.480"/><rect x="45.6" y="148.5" width="0.9" height="1.100" fill="#808080" opacity="0.480"/><rect x="46.5" y="148.5" width="10.2" height="1.100" fill="#d4d4d4" opacity="0.480"/><rect x="56.7" y="148.5" width="1.9" height="1.100" fill="#808080" opacity="0.480"/><rect x="58.6" y="148.5" width="2.8" height="1.100" fill="#569cd6" opacity="0.480"/><rect x="61.4" y="148.5" width="0.9" height="1.100" fill="#808080" opacity="0.480"/><rect x="11.2" y="150.5" width="1.9" height="1.100" fill="#808080" opacity="0.480"/><rect x="13.0" y="150.5" width="7.4" height="1.100" fill="#569cd6" opacity="0.480"/><rect x="20.5" y="150.5" width="0.9" height="1.100" fill="#808080" opacity="0.480"/><rect x="7.4" y="152.5" width="1.9" height="1.100" fill="#808080" opacity="0.480"/><rect x="9.3" y="152.5" width="2.8" height="1.100" fill="#569cd6" opacity="0.480"/><rect x="12.1" y="152.5" width="0.9" height="1.100" fill="#808080" opacity="0.480"/><rect x="3.7" y="154.5" width="1.9" height="1.100" fill="#808080" opacity="0.480"/><rect x="5.6" y="154.5" width="13.0" height="1.100" fill="#569cd6" opacity="0.480"/><rect x="18.6" y="154.5" width="0.9" height="1.100" fill="#808080" opacity="0.480"/><rect x="0.0" y="156.5" width="1.9" height="1.100" fill="#808080" opacity="0.480"/><rect x="1.9" y="156.5" width="7.4" height="1.100" fill="#569cd6" opacity="0.480"/><rect x="9.3" y="156.5" width="0.9" height="1.100" fill="#808080" opacity="0.480"/></svg>
<div class="abs" style="left:1445px;top:0;width:1px;height:622px;background:#171717"></div>
<div class="abs" style="left:1445px;top:0;width:14px;height:1px;background:#171717"></div>
<div class="abs" style="left:1446px;top:66px;width:13px;height:2px;background:#a6a6a6"></div>
</div>
</div>

<div class="abs" style="left:461px;top:713px;width:1459px;height:1px;background:#2b2b2b"></div>
<div id="panel">
<span class="pt" style="transform-origin:0 50%;transform:scaleX(0.883);left:20px">PROBLEMS</span>
<span class="pt" style="transform-origin:0 50%;transform:scaleX(0.928);left:116px;color:#e7e7e7">OUTPUT</span>
<span class="pt" style="transform-origin:0 50%;transform:scaleX(0.896);left:181px">DEBUG CONSOLE</span>
<span class="pt" style="transform-origin:0 50%;transform:scaleX(0.917);left:291px">TERMINAL</span>
<span class="pt" style="transform-origin:0 50%;transform:scaleX(0.849);left:366px">PORTS</span>
<span class="pt" style="transform-origin:0 50%;transform:scaleX(0.907);left:421px">HISTORY</span>
<span class="pt" style="transform-origin:0 50%;transform:scaleX(0.926);left:488px">POSTMAN CONSOLE</span>
<div class="abs" style="left:115px;top:27px;width:44px;height:1px;background:#0078d4"></div>
<div class="abs" style="left:78px;top:9px;width:16px;height:16px;border-radius:8px;background:#0078d4;color:#fff;font-size:11px;line-height:16px;text-align:center">1</div>
<div class="abs" style="left:736px;top:6px;width:400px;height:24px;background:#313131;border-radius:2px"></div>
<span class="t" style="left:743px;top:13px;font-size:13px;color:#8f8f8f">Filter</span>
<div class="abs" style="left:1140px;top:6px;width:170px;height:23px;background:#313131;border:1px solid #3c3c3c;border-radius:2px"></div>
<span class="t" style="letter-spacing:-0.02px;left:1149px;top:12px;font-size:13px;color:#ccc">Salesforce CLI</span>
<svg class="abs" style="left:1288px;top:10px" width="16" height="16" viewBox="0 0 16 16" fill="none" stroke="#ccc" stroke-width="1.200"><path d="M2.500 5.500 8 11l5.500-5.500"/></svg>
<svg class="abs" style="left:1315px;top:10px" width="16" height="16" viewBox="0 0 16 16" fill="none" stroke="#ccc" stroke-width="1"><path d="M1.800 3.200h14.200M1.800 6.400h14.200M1.800 9.600h8.600M1.800 12.800h8.600"/><path d="M11.800 9.200l3.800 3.800M15.600 9.200l-3.800 3.800" stroke-width="1.300"/></svg>
<svg class="abs" style="left:1340px;top:9px" width="16" height="17" viewBox="0 0 16 17" fill="none" stroke="#ccc" stroke-width="1.200"><rect x="2.600" y="8.400" width="11" height="7.200" rx=".6"/><path d="M4.800 8.400V5.200a3.200 3.200 0 0 1 6.400 0v3.200"/></svg>
<svg class="abs" style="left:1364px;top:10px" width="16" height="16" viewBox="0 0 16 16" fill="#ccc"><circle cx="3" cy="8" r="1.150"/><circle cx="8" cy="8" r="1.150"/><circle cx="13" cy="8" r="1.150"/></svg>
<div class="abs" style="left:1390px;top:9px;width:1px;height:16px;background:#5a5a5a"></div>
<svg class="abs" style="left:1402px;top:10px" width="16" height="16" viewBox="0 0 16 16" fill="none" stroke="#ccc" stroke-width="1.200"><path d="M2.400 5.400V2h3.400M10.800 2h3.400v3.400M14.200 10.200v3.400h-3.400M5.800 13.600H2.400v-3.400"/></svg>
<svg class="abs" style="left:1428px;top:10px" width="16" height="16" viewBox="0 0 16 16" fill="none" stroke="#ccc" stroke-width="1.200"><path d="M3.600 3l9 9M12.600 3l-9 9"/></svg>
<div id="out">
<div class="ol" style="top:-14.4px">Using the deploy metadata api version 64.0 and apply source tracking app changes.</div>
<div class="ol" style="top:23.6px">14:27:46.445 Ended SFDX: Deploy This Source to Org</div>
<div class="ol" style="top:42.6px">14:27:49.608 Starting SFDX: Deploy This Source to Org</div>
<div class="ol" style="top:80.6px">=== Deployed Source</div>
<div class="ol" style="top:99.6px">STATE    FULL NAME      TYPE                      PROJECT PATH</div>
<div class="ol" style="top:118.6px;color:#9a9a9a;margin-top:-1px">───────  ─────────────  ────────────────────────  ──────────────────────────────────────────────────────────────────</div>
<div class="ol" style="top:137.6px">Changed  stripePayment  LightningComponentBundle  force-app\main\default\lwc\stripePayment\stripePayment.css</div>
<div class="ol" style="top:156.6px">Changed  stripePayment  LightningComponentBundle  force-app\main\default\lwc\stripePayment\stripePayment.html</div>
<div class="ol" style="top:175.6px">Changed  stripePayment  LightningComponentBundle  force-app\main\default\lwc\stripePayment\stripePayment.js</div>
<div class="ol" style="top:194.6px">Changed  stripePayment  LightningComponentBundle  force-app\main\default\lwc\stripePayment\stripePayment.js-meta.xml</div>
<div class="ol" style="top:232.6px">14:27:54.63 Ended SFDX: Deploy This Source to Org</div>
<div class="abs" style="left:0;top:0;width:1459px;height:5px;background:linear-gradient(#0a0a0a,rgba(10,10,10,0))"></div>
</div>
<div class="abs" style="left:1445px;top:34px;width:1px;height:270px;background:#262626"></div>
<div class="abs" style="left:1446px;top:35px;width:13px;height:1px;background:#4a4a4a"></div>
</div>

<div id="status">
<div class="abs" style="left:0;top:1px;width:34px;height:21px;background:#0078d4"></div>
<svg class="ic" style="left:10px;color:#fff" viewBox="0 0 14 14" fill="none" stroke="currentColor" stroke-width="1.200"><path d="M2.600 4.800 6.600 8.600l-4 3.800M11.400 1.600 7.400 5.400l4 3.800"/></svg>
<svg class="ic" style="left:42px" viewBox="0 0 14 14" fill="none" stroke="currentColor" stroke-width="1.050"><circle cx="7" cy="7.400" r="5.800"/><path d="M4.800 5.200l4.400 4.400M9.200 5.200 4.800 9.600"/></svg>
<span class="s" style="left:59px">0</span>
<svg class="ic" style="left:69px" viewBox="0 0 14 14" fill="none" stroke="currentColor" stroke-width="1.050" stroke-linejoin="round"><path d="M7 1.600 12.800 12.600H1.200z"/><path d="M7 5.400v4M7 10.400v1.200"/></svg>
<span class="s" style="left:86px">1</span>
<svg class="ic" style="left:109px" viewBox="0 0 14 14" fill="none" stroke="currentColor" stroke-width="1.100"><rect x="1" y="1.800" width="11.600" height="10.800" rx=".8"/><path d="M1 4.800h11.600" stroke-width="1.400"/></svg>
<svg class="ic" style="left:139px" viewBox="0 0 14 14" fill="none" stroke="currentColor" stroke-width="1.200"><path d="M4.800 1.400v3M9.200 1.400v3M3.400 4.400h7.200v3.200a3.600 3.600 0 0 1-7.200 0zM7 11.200v2.400"/></svg>
<span class="s" style="letter-spacing:-0.03px;left:156px">arshil.tforce553@agentforce.com</span>
<svg class="ic" style="left:347px" viewBox="0 0 14 14" fill="none" stroke="currentColor" stroke-width="2"><path d="M1.400 3.200h11.200M1.400 6.800h11.200M1.400 10.400h11.200"/></svg>
<span class="s" style="letter-spacing:-0.18px;left:1387px">Ln 13, Col 70</span>
<span class="s" style="letter-spacing:-0.38px;left:1471px">Spaces: 4</span>
<span class="s" style="letter-spacing:-0.20px;left:1536px">UTF-8</span>
<span class="s" style="letter-spacing:-1.01px;left:1584px">LF</span>
<svg class="ic" style="left:1612px" viewBox="0 0 14 14" fill="none" stroke="currentColor" stroke-width="1.100"><path d="M4.600 1.400c-1.600 0-2 .6-2 1.800v1.400c0 1-.4 1.600-1.400 1.800 1 .2 1.400.8 1.400 1.800v1.400c0 1.200.4 1.800 2 1.800"/><circle cx="9.200" cy="9.800" r="2.200"/><path d="M7.600 1.400c1.600 0 2 .6 2 1.800v1.400"/><path d="M9.200 6.400v1.200M9.200 12v1.200"/></svg>
<span class="s" style="letter-spacing:-0.42px;left:1632px">HTML</span>
<svg class="ic" style="left:1678px;width:16px" viewBox="0 0 16 14" fill="none" stroke="currentColor" stroke-width="1.300"><path d="M1.800 6.600v3.800c1.800 1.600 4 2.200 6.200 2.200s4.400-.6 6.200-2.200V6.600"/><rect x="2.400" y="1.600" width="5" height="5.200" rx="2"/><rect x="8.600" y="1.600" width="5" height="5.200" rx="2"/><path d="M6.200 8.800v1.800M9.800 8.800v1.800"/></svg>
<svg class="ic" style="left:1708px" viewBox="0 0 14 14" fill="none" stroke="currentColor" stroke-width="1.200"><circle cx="7" cy="6.200" r="1.300" fill="currentColor"/><path d="M4.400 8.800a3.700 3.700 0 1 1 5.200 0M2.600 10.600a6.200 6.200 0 1 1 8.800 0M7 7.400v6"/></svg>
<span class="s" style="letter-spacing:-0.34px;left:1726px">Go Live</span>
<svg class="ic" style="left:1783px" viewBox="0 0 14 14" fill="none" stroke="currentColor" stroke-width="1.200"><circle cx="7" cy="7.600" r="5.600"/><circle cx="2.600" cy="2.400" r="1.100" fill="currentColor"/><circle cx="11.400" cy="2.400" r="1.100" fill="currentColor"/><rect x="3.400" y="7" width="3" height="2.200" rx="1" fill="currentColor" stroke="none"/><rect x="7.600" y="7" width="3" height="2.200" rx="1" fill="currentColor" stroke="none"/><path d="M3.600 6c1.400-.2 2.400-1 3-2.200 1 1.200 2.200 2 4 2.200"/></svg>
<div class="abs" style="left:1807px;top:1px;width:76px;height:21px;background:#c21a0c"></div>
<svg class="ic" style="left:1817px;color:#fff" viewBox="0 0 14 14" fill="none" stroke="currentColor" stroke-width="1.100" stroke-linejoin="round"><path d="M7 1.600 12.800 12.600H1.200z"/><path d="M7 5.400v4M7 10.400v1.200"/></svg>
<span class="s" style="letter-spacing:0.04px;left:1834px;color:#fff">Prettier</span>
<svg class="ic" style="left:1891px" viewBox="0 0 14 14" fill="none" stroke="currentColor" stroke-width="1.100" stroke-linejoin="round"><path d="M8.400 2.200A4 4 0 0 0 3 6v3.200L1.600 11.200h10.800L11 9.200V7.600M5.600 11.400a1.500 1.500 0 0 0 2.800 0"/><circle cx="11" cy="3.400" r="2" fill="currentColor" stroke="none"/></svg>
</div>

<div id="taskbar">
<svg class="abs" style="left:16px;top:12px" width="17" height="17" viewBox="0 0 17 17" fill="#fff"><path d="M0 2.400 6.900 1.400V8H0zM7.800 1.300 17 0v8H7.800zM0 8.900h6.900v6.600L0 14.500zM7.800 8.900H17V17l-9.200-1.300z"/></svg>
<div class="abs" style="left:48px;top:0;width:288px;height:40px;background:#f2f2f2"></div>
<svg class="abs" style="left:60px;top:11px" width="18" height="18" viewBox="0 0 18 18" fill="none" stroke="#222" stroke-width="1.400"><circle cx="10.800" cy="7" r="5"/><path d="M7.200 10.600 1.200 16.800"/></svg>
<span class="t" style="letter-spacing:-0.38px;left:88px;top:13px;font-size:15px;color:#3a3a3a">Quick search</span>
<svg class="abs" style="left:264px;top:0" width="70" height="40" viewBox="0 0 70 40"><path d="M18 37 31 17l5 6 6-10 5 7 4-5 11 22z" fill="#dcc3b2"/><path d="M31 17l5 6 3-5 3 12-15 2zM42 13l5 7 2-3 6 16-16-2z" fill="#b89484" opacity=".7"/><path d="M28 37l5-9 3 4 4-7 3 5 3-4 6 11z" fill="#3d7f63"/><ellipse cx="35" cy="36.500" rx="33" ry="3.200" fill="#3c9a55"/><path d="M24 39c3-5 10-6 15-4s9 2 12 4z" fill="#55c3e8"/><rect x="5.2" y="21.7" width="1.6" height="14.3" fill="#9a5a2a"/><path d="M6.0 14.0l2.0 5.7h-4.0z" fill="#3c9a55"/><path d="M6.0 17.7l2.8 5.7h-5.7z" fill="#3c9a55"/><path d="M6.0 21.5l3.6 5.7h-7.3z" fill="#3c9a55"/><path d="M6.0 25.2l4.5 5.7h-8.9z" fill="#3c9a55"/><rect x="14.9" y="15.5" width="2.2" height="21.4" fill="#9a5a2a"/><path d="M16.0 4.0l2.7 8.6h-5.4z" fill="#2f8a46"/><path d="M16.0 9.6l3.8 8.6h-7.6z" fill="#2f8a46"/><path d="M16.0 15.2l4.9 8.6h-9.7z" fill="#2f8a46"/><path d="M16.0 20.8l5.9 8.6h-11.9z" fill="#2f8a46"/><rect x="46.3" y="23.0" width="1.4" height="13.0" fill="#9a5a2a"/><path d="M47.0 16.0l1.8 5.2h-3.6z" fill="#2f8a46"/><path d="M47.0 19.4l2.5 5.2h-5.0z" fill="#2f8a46"/><path d="M47.0 22.8l3.2 5.2h-6.5z" fill="#2f8a46"/><path d="M47.0 26.2l4.0 5.2h-7.9z" fill="#2f8a46"/><rect x="54.0" y="18.1" width="2.0" height="18.9" fill="#9a5a2a"/><path d="M55.0 8.0l2.5 7.5h-5.0z" fill="#3c9a55"/><path d="M55.0 12.9l3.5 7.5h-6.9z" fill="#3c9a55"/><path d="M55.0 17.9l4.5 7.5h-8.9z" fill="#3c9a55"/><path d="M55.0 22.8l5.4 7.5h-10.9z" fill="#3c9a55"/></svg>
<svg class="abs" style="left:351px;top:11px" width="18" height="17" viewBox="0 0 18 17" fill="none" stroke="#fff" stroke-width="1"><rect x="2.500" y="4" width="8" height="8"/><path d="M1 3V1h11v2M1 13v2h11v-2M15.500 1v3.500M15.500 8v7"/><rect x="14.500" y="4.500" width="2" height="3" fill="#fff" stroke="none"/></svg>
<!-- copilot -->
<svg class="abs" style="left:399px;top:9px" width="24" height="22" viewBox="0 0 24 22"><defs><linearGradient id="cpA" x1="0" y1="0" x2="0.300" y2="1"><stop offset="0" stop-color="#2a7df0"/><stop offset=".4" stop-color="#2fd0c8"/><stop offset=".7" stop-color="#8edb4f"/><stop offset="1" stop-color="#ffd23f"/></linearGradient><linearGradient id="cpB" x1="0.300" y1="0" x2="0" y2="1"><stop offset="0" stop-color="#7a5cff"/><stop offset=".5" stop-color="#e24bb0"/><stop offset="1" stop-color="#ff7a45"/></linearGradient></defs><path d="M8.500 1h5.500c1.600 0 2.500 1 2 2.600L12.500 15c-.5 1.600-1.600 2.600-3.200 2.600H3.500c-2.200 0-3.300-1.600-2.700-3.700L4 4C4.600 2 6 1 8.500 1z" fill="url(#cpA)"/><path d="M15.500 21H10c-1.600 0-2.500-1-2-2.600L11.500 7c.5-1.600 1.600-2.600 3.200-2.600h5.800c2.200 0 3.300 1.600 2.700 3.700L20 18c-.6 2-2 3-4.500 3z" fill="url(#cpB)"/></svg>
<!-- edge -->
<svg class="abs" style="left:448px;top:8px" width="24" height="24" viewBox="0 0 24 24"><defs><linearGradient id="edA" x1="0" y1="0" x2="1" y2="1"><stop offset="0" stop-color="#1f9de0"/><stop offset="1" stop-color="#0c4fa0"/></linearGradient><linearGradient id="edB" x1="0" y1="0" x2="1" y2="0"><stop offset="0" stop-color="#2fb0d8"/><stop offset="1" stop-color="#6fd84a"/></linearGradient></defs><circle cx="12" cy="12" r="11.500" fill="url(#edA)"/><path d="M1 10C2.500 4 7 .5 12 .5c6.500 0 11.500 5 11.500 10.500 0 3.500-2.500 5.500-5 5.500-2.500 0-4-1.200-4-2.500 0-.8.500-1.300.8-1.800C15.500 9 12.500 6.500 9 6.500 5 6.500 2 8.500 1 10z" fill="url(#edB)"/><path d="M9 6.500c-3 1.500-4.500 4.500-4 8 .5 3.500 3 7 7.500 8.800-4-.2-8-3.300-9.500-7.300C2 13 2.500 9 5 7.500c1.300-.8 2.700-1 4-1z" fill="#0d60b5" opacity=".6"/></svg>
<!-- explorer -->
<svg class="abs" style="left:496px;top:8px" width="24" height="24" viewBox="0 0 24 24"><path d="M1 4.500c0-.8.700-1.500 1.500-1.500H9l2 2.500h10.500c.8 0 1.500.7 1.500 1.500V9H1z" fill="#e9a521"/><rect x="1" y="7" width="22" height="13.500" rx="1.200" fill="#fbd25d"/><path d="M6 20.500v-5c0-.6.400-1 1-1h10c.6 0 1 .4 1 1v5z" fill="#3f93d9"/><rect x="9" y="17.500" width="6" height="3" fill="#fbd25d"/></svg>
<!-- store -->
<svg class="abs" style="left:545px;top:7px" width="24" height="26" viewBox="0 0 24 26"><path d="M7.500 7V4.500a2.500 2.500 0 0 1 2.500-2.500h4a2.500 2.500 0 0 1 2.500 2.500V7" fill="none" stroke="#3a96dd" stroke-width="1.600"/><rect x="1.500" y="6.500" width="21" height="18" rx="2.500" fill="#f3f3f3"/><rect x="7" y="10.500" width="4.400" height="4.400" fill="#f25022"/><rect x="12.600" y="10.500" width="4.400" height="4.400" fill="#7fba00"/><rect x="7" y="16.100" width="4.400" height="4.400" fill="#00a4ef"/><rect x="12.600" y="16.100" width="4.400" height="4.400" fill="#ffb900"/></svg>
<!-- outlook -->
<svg class="abs" style="left:593px;top:8px" width="26" height="24" viewBox="0 0 26 24"><path d="M8 6 17 1l8 5v13a2 2 0 0 1-2 2H10a2 2 0 0 1-2-2z" fill="#1a6fc4"/><path d="M9 9l8-5 8 5v3H9z" fill="#50b8f0"/><path d="M8 12l17 9.500V19L12 11z" fill="#2b8ae0"/><path d="M25 10 10 21h13a2 2 0 0 0 2-2z" fill="#36a3ea"/><rect x="1" y="7.500" width="12" height="12" rx="1.500" fill="#0f5cb0"/><text x="7" y="17.500" font-family="Liberation Sans,sans-serif" font-weight="bold" font-size="10" fill="#fff" text-anchor="middle">O</text></svg>
<!-- chrome -->
<svg class="abs" style="left:643px;top:7px" width="26" height="26" viewBox="0 0 24 24"><circle cx="12" cy="12" r="11" fill="#fbc116"/><path d="M12 1a11 11 0 0 1 9.500 5.500H12a5.500 5.500 0 0 0-5.200 3.700L2.800 5.700A11 11 0 0 1 12 1z" fill="#e33b2e"/><path d="M2.500 6.500 7.200 14.700A5.500 5.500 0 0 0 12 17.500l-3.800 4.800A11 11 0 0 1 2.500 6.500z" fill="#2da94f"/><circle cx="12" cy="12" r="5" fill="#fff"/><circle cx="12" cy="12" r="4" fill="#4285f4"/></svg>
<svg class="abs" style="left:692px;top:7px" width="30" height="30" viewBox="0 0 28 28"><circle cx="12" cy="12" r="11" fill="#fbc116"/><path d="M12 1a11 11 0 0 1 9.500 5.500H12a5.500 5.500 0 0 0-5.200 3.700L2.800 5.700A11 11 0 0 1 12 1z" fill="#e33b2e"/><path d="M2.500 6.500 7.200 14.700A5.500 5.500 0 0 0 12 17.500l-3.800 4.800A11 11 0 0 1 2.500 6.500z" fill="#2da94f"/><circle cx="12" cy="12" r="5" fill="#fff"/><circle cx="12" cy="12" r="4" fill="#4285f4"/><circle cx="19" cy="19" r="6" fill="#12a39a"/><text x="19" y="22" font-family="Liberation Sans,sans-serif" font-size="8" fill="#fff" text-anchor="middle">A</text></svg>
<!-- notepad -->
<svg class="abs" style="left:741px;top:8px" width="26" height="24" viewBox="0 0 26 24"><defs><linearGradient id="npA" x1="0" y1="0" x2="1" y2="1"><stop offset="0" stop-color="#2f7f92"/><stop offset=".5" stop-color="#8cc3d2"/><stop offset="1" stop-color="#eef7fa"/></linearGradient></defs><path d="M9 2h13l-3.500 20H2z" fill="#cfe6ee"/><path d="M9.500 3.500h11L17.300 20.500H4z" fill="url(#npA)"/><path d="M9 2h13l-.4 2H8.400z" fill="#dfeef3"/><path d="M18.500 22 22 2l1.500 1-3.500 20z" fill="#c8a86a"/></svg>
<!-- taskpro -->
<div class="abs" style="left:791px;top:8px;width:24px;height:24px;background:#fff"></div>
<svg class="abs" style="left:793px;top:11px" width="20" height="12" viewBox="0 0 20 12"><rect x="1" y="0" width="18" height="9" rx="1" fill="#3a8ec8"/><rect x="2.500" y="1.500" width="15" height="6" fill="#e8f3e0"/><rect x="7" y="9" width="6" height="1.500" fill="#3a8ec8"/><rect x="5" y="10.500" width="10" height="1.200" fill="#3a8ec8"/><path d="M5 6l2-2.500 2 2 3-3.500 3 4" fill="none" stroke="#3c9a55" stroke-width="1"/></svg>
<span class="t" style="left:794px;top:25px;font-size:5px;color:#444;font-weight:bold">TaskPro</span>
<!-- vscode active -->
<div class="abs" style="left:828px;top:0;width:48px;height:40px;background:#484a4c"></div>
<svg class="abs" style="left:840px;top:8px" width="24" height="24" viewBox="0 0 100 100"><path d="M71 3 32 40 13 25 5 29v42l8 4 19-15 39 37 24-10V13zM13 62V38l12 12zm58 9L43 50l28-21z" fill="#2ca3ec"/><path d="M71 3 95 13v74L71 97z" fill="#1f8ad2"/></svg>
<div class="abs" style="left:685px;top:38px;width:32px;height:2px;background:#76b9ed"></div>
<div class="abs" style="left:719px;top:38px;width:5px;height:2px;background:#5a93c0"></div>
<div class="abs" style="left:734px;top:38px;width:40px;height:2px;background:#76b9ed"></div>
<div class="abs" style="left:783px;top:38px;width:40px;height:2px;background:#76b9ed"></div>
<div class="abs" style="left:828px;top:38px;width:48px;height:2px;background:#76b9ed"></div>
<!-- tray -->
<div class="abs" style="left:1519px;top:11px;width:20px;height:18px;border-radius:4px;background:#5b63f5"></div>
<svg class="abs" style="left:1525px;top:15px" width="9" height="10" viewBox="0 0 9 10"><path d="M1 0.500 8.500 5 1 9.500z" fill="#fff"/></svg>
<span class="t" style="letter-spacing:-0.63px;left:1549px;top:12px;font-size:15px;color:#fff">Eyes of Wakanda offi...</span>
<svg class="abs" style="left:1711px;top:14px" width="16" height="12" viewBox="0 0 16 12" fill="none" stroke="#fff" stroke-width="1.300"><path d="M1.500 9.500 8 3l6.500 6.500"/></svg>
<svg class="abs" style="left:1737px;top:12px" width="14" height="16" viewBox="0 0 16 18" fill="none" stroke="#fff" stroke-width="1.100"><rect x="1" y="4" width="9.500" height="9" rx="2"/><path d="M10.500 7.500 14 5.500v6l-3.500-2M3 1.500c1.500-1 4-1 5.500 0M3 16c1.500 1 4 1 5.500 0"/></svg>
<svg class="abs" style="left:1761px;top:12px" width="16" height="16" viewBox="0 0 18 18" fill="none" stroke="#fff" stroke-width="1.200"><path d="M1.500 15.500a13 13 0 0 1 14-13" opacity=".95"/><path d="M5 15.500a9.500 9.500 0 0 1 10.500-9.500"/><path d="M8.500 15.500a6 6 0 0 1 7-6"/><circle cx="13.500" cy="14.500" r="1.500" fill="#fff" stroke="none"/></svg>
<svg class="abs" style="left:1782px;top:12px" width="17" height="17" viewBox="0 0 18 18" fill="none" stroke="#fff" stroke-width="1.200"><path d="M1.500 6.500h3L8.500 3v12l-4-3.500h-3z"/><path d="M11 6.500c1 1.500 1 3.500 0 5"/><path d="M13.500 4.500c2 2.700 2 6.300 0 9" opacity=".6"/><path d="M16 3c2.600 3.600 2.600 8.400 0 12" opacity=".35"/></svg>
<span class="t" style="letter-spacing:-0.24px;left:1814px;top:5px;font-size:12px;color:#fff">2:30 PM</span>
<span class="t" style="letter-spacing:-0.04px;left:1809px;top:23px;font-size:12px;color:#fff">8/25/2025</span>
<svg class="abs" style="left:1878px;top:9px" width="26" height="26" viewBox="0 0 26 26"><path d="M1 1h17v13H6l-5 4z" fill="#fff"/><path d="M4 4.500h11M4 7.500h11M4 10.500h8" stroke="#101316" stroke-width="1.200"/><circle cx="17.500" cy="16.500" r="6.500" fill="#101316" stroke="#bbb" stroke-width="1"/><text x="17.500" y="20.500" font-family="Liberation Sans,sans-serif" font-size="11" fill="#fff" text-anchor="middle">1</text></svg>
<div class="abs" style="left:1915px;top:0;width:1px;height:40px;background:#555"></div>
</div>

</body>
</html>
